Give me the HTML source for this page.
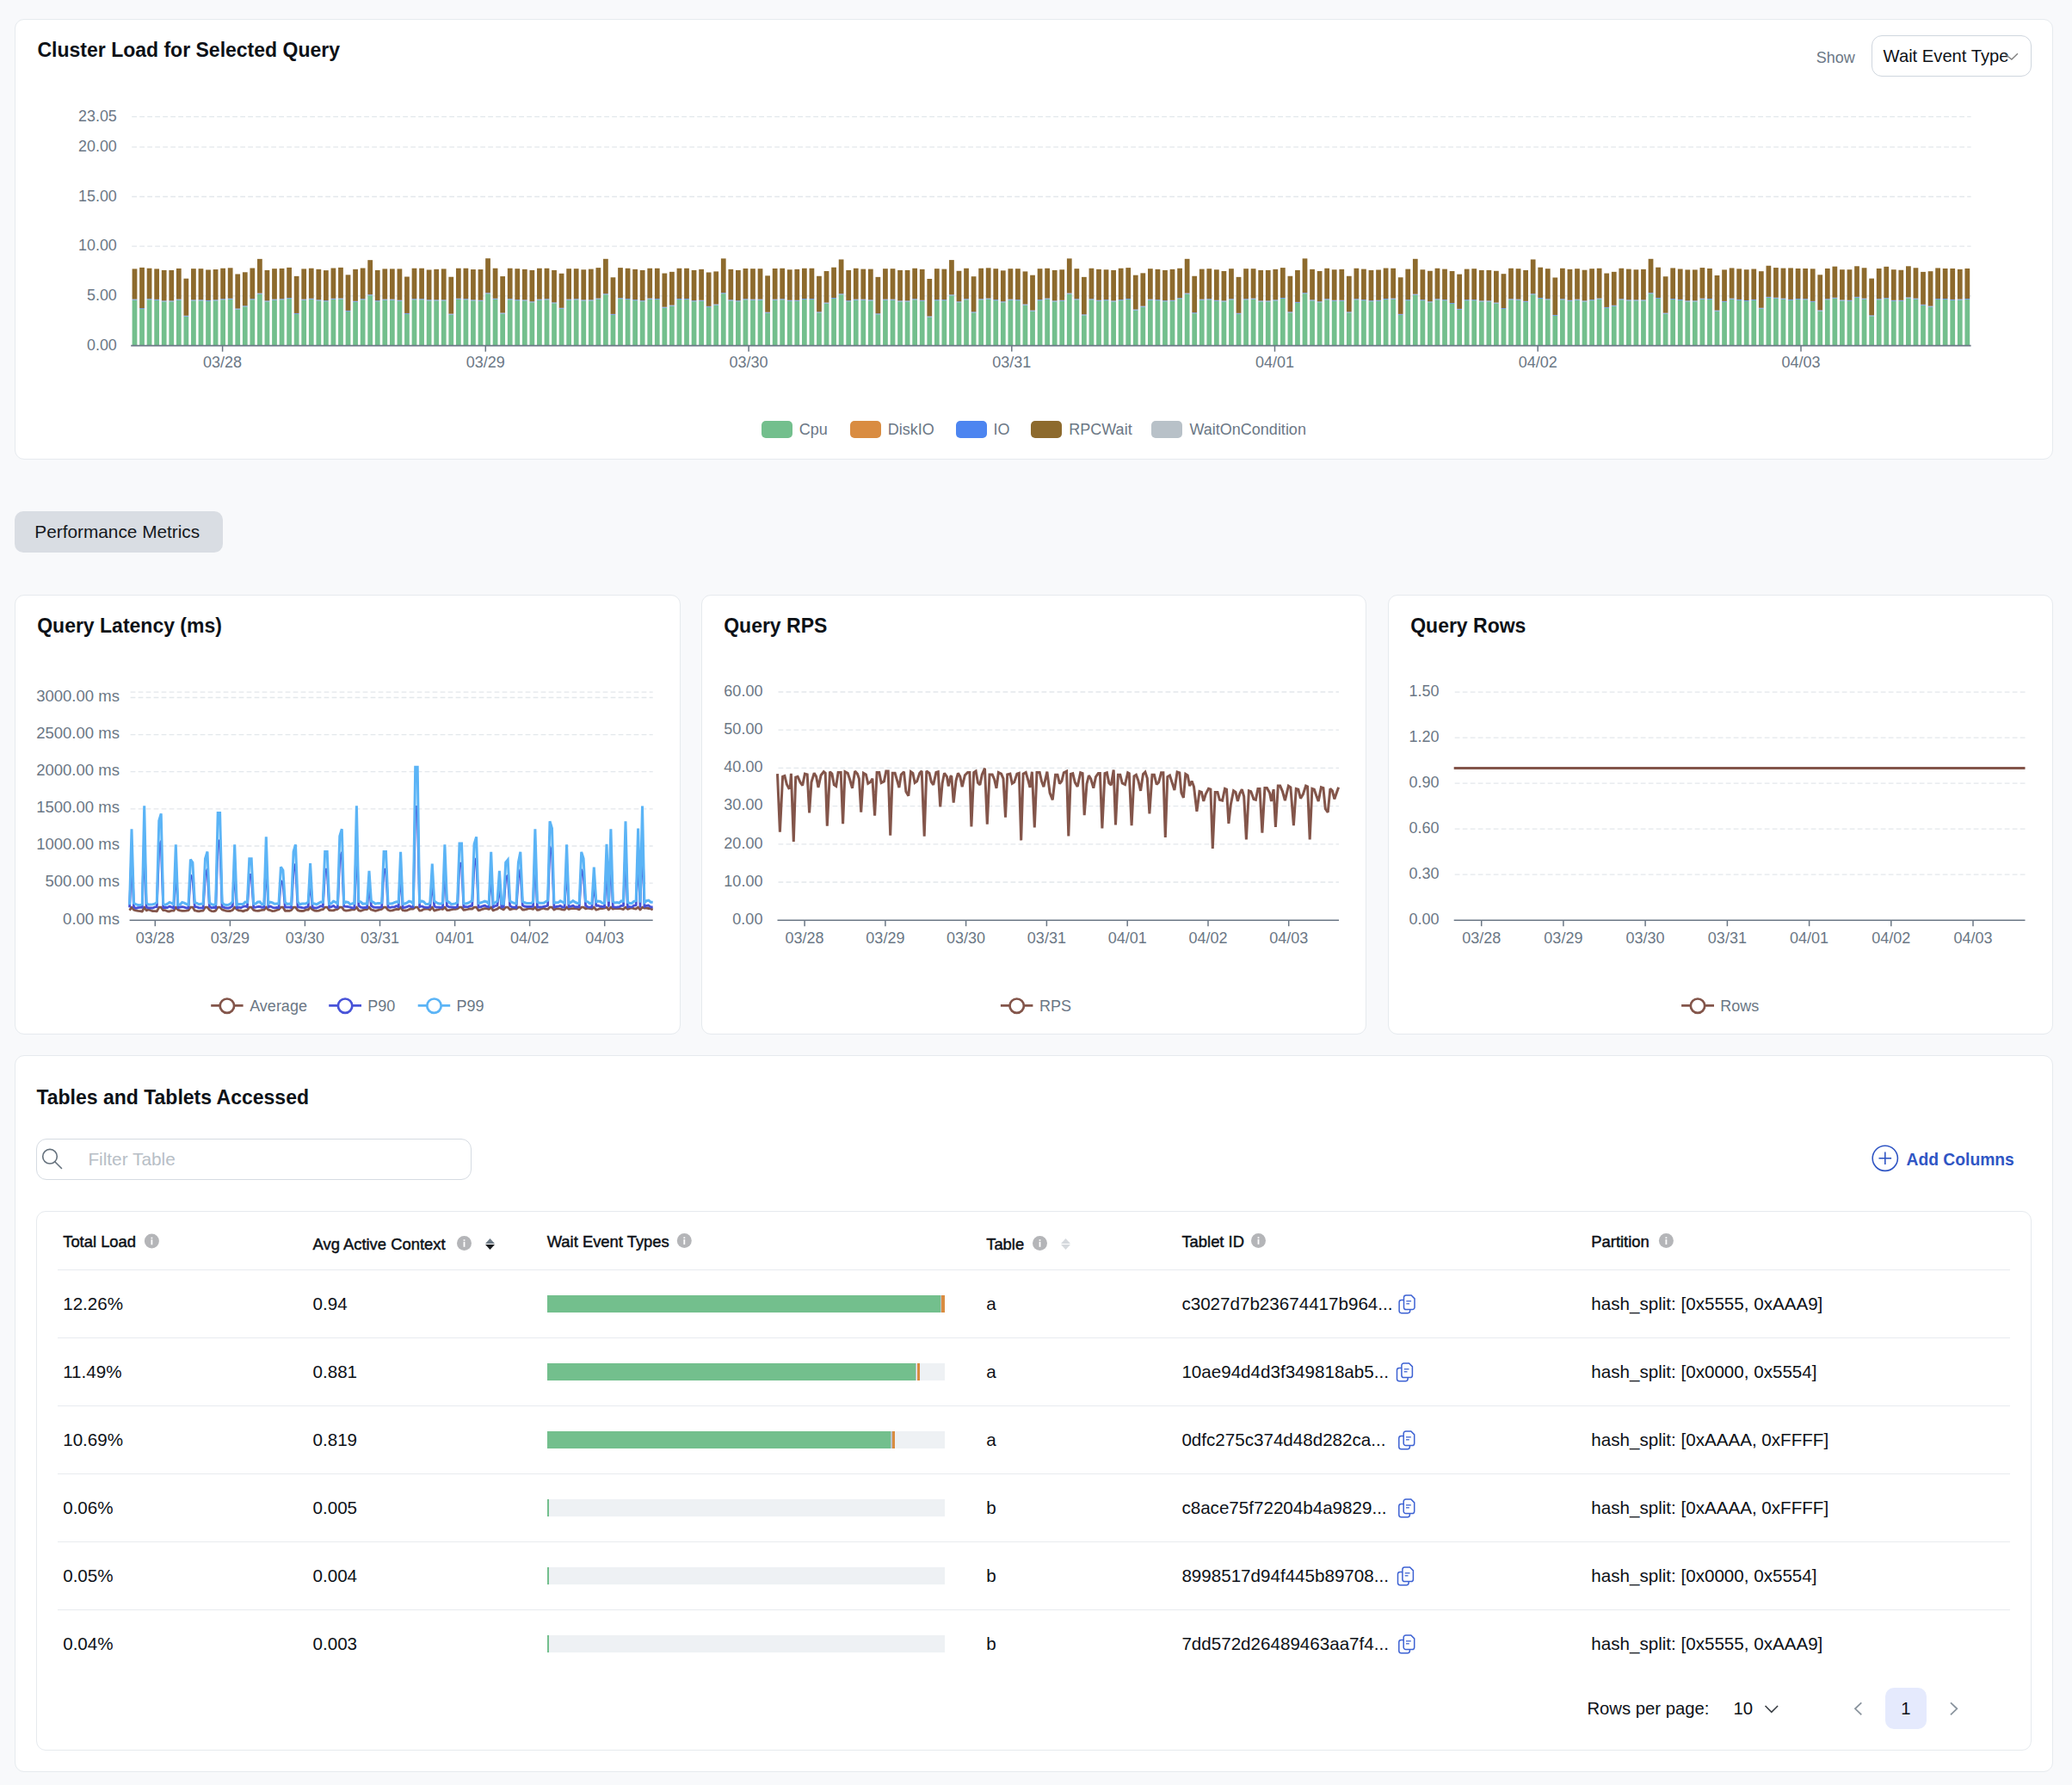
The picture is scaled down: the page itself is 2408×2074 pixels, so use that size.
<!DOCTYPE html>
<html><head><meta charset="utf-8"><style>
html,body{margin:0;padding:0;}
body{width:2408px;height:2074px;background:#f8f9fb;position:relative;overflow:hidden;font-family:"Liberation Sans", sans-serif;}
.t{position:absolute;white-space:nowrap;line-height:1;}
svg{position:absolute;left:0;top:0;}
</style></head><body>
<div style="position:absolute;left:17.0px;top:22.0px;width:2369.0px;height:512.0px;box-sizing:border-box;background:#fff;border:1px solid #e6eaee;border-radius:11px;"></div>
<div class="t" style="left:43.5px;top:47.2px;font-size:23px;color:#0d1117;font-weight:700;">Cluster Load for Selected Query</div>
<div class="t" style="left:2110.8px;top:58.2px;font-size:18px;color:#6b7785;font-weight:400;">Show</div>
<div style="position:absolute;left:2175.0px;top:41.0px;width:186.0px;height:48.0px;box-sizing:border-box;border:1.5px solid #cfd6de;border-radius:12px;background:#fff;"></div>
<div class="t" style="left:2188.6px;top:55.1px;font-size:20.2px;color:#0d1117;font-weight:400;">Wait Event Type</div>
<div class="t" style="right:2272.2px;top:126.8px;font-size:17.9px;color:#6b7785;font-weight:400;text-align:right;">23.05</div>
<div class="t" style="right:2272.2px;top:162.0px;font-size:17.9px;color:#6b7785;font-weight:400;text-align:right;">20.00</div>
<div class="t" style="right:2272.2px;top:219.7px;font-size:17.9px;color:#6b7785;font-weight:400;text-align:right;">15.00</div>
<div class="t" style="right:2272.2px;top:277.4px;font-size:17.9px;color:#6b7785;font-weight:400;text-align:right;">10.00</div>
<div class="t" style="right:2272.2px;top:335.1px;font-size:17.9px;color:#6b7785;font-weight:400;text-align:right;">5.00</div>
<div class="t" style="right:2272.2px;top:392.8px;font-size:17.9px;color:#6b7785;font-weight:400;text-align:right;">0.00</div>
<div class="t" style="left:58.6px;width:400px;top:412.0px;font-size:18px;color:#6b7785;font-weight:400;text-align:center;">03/28</div>
<div class="t" style="left:364.3px;width:400px;top:412.0px;font-size:18px;color:#6b7785;font-weight:400;text-align:center;">03/29</div>
<div class="t" style="left:670.1px;width:400px;top:412.0px;font-size:18px;color:#6b7785;font-weight:400;text-align:center;">03/30</div>
<div class="t" style="left:975.8px;width:400px;top:412.0px;font-size:18px;color:#6b7785;font-weight:400;text-align:center;">03/31</div>
<div class="t" style="left:1281.5px;width:400px;top:412.0px;font-size:18px;color:#6b7785;font-weight:400;text-align:center;">04/01</div>
<div class="t" style="left:1587.2px;width:400px;top:412.0px;font-size:18px;color:#6b7785;font-weight:400;text-align:center;">04/02</div>
<div class="t" style="left:1893.0px;width:400px;top:412.0px;font-size:18px;color:#6b7785;font-weight:400;text-align:center;">04/03</div>
<div style="position:absolute;left:884.7px;top:489.4px;width:36.0px;height:20.0px;box-sizing:border-box;background:#73bf8d;border-radius:5px;"></div>
<div class="t" style="left:928.8px;top:489.8px;font-size:18px;color:#6b7785;font-weight:400;">Cpu</div>
<div style="position:absolute;left:987.7px;top:489.4px;width:36.0px;height:20.0px;box-sizing:border-box;background:#d98c41;border-radius:5px;"></div>
<div class="t" style="left:1031.8px;top:489.8px;font-size:18px;color:#6b7785;font-weight:400;">DiskIO</div>
<div style="position:absolute;left:1110.7px;top:489.4px;width:36.0px;height:20.0px;box-sizing:border-box;background:#4d85f0;border-radius:5px;"></div>
<div class="t" style="left:1154.4px;top:489.8px;font-size:18px;color:#6b7785;font-weight:400;">IO</div>
<div style="position:absolute;left:1198.2px;top:489.4px;width:36.0px;height:20.0px;box-sizing:border-box;background:#8d6a2d;border-radius:5px;"></div>
<div class="t" style="left:1242.3px;top:489.8px;font-size:18px;color:#6b7785;font-weight:400;">RPCWait</div>
<div style="position:absolute;left:1338.4px;top:489.4px;width:36.0px;height:20.0px;box-sizing:border-box;background:#b8c1c8;border-radius:5px;"></div>
<div class="t" style="left:1382.5px;top:489.8px;font-size:18px;color:#6b7785;font-weight:400;">WaitOnCondition</div>
<div style="position:absolute;left:17.0px;top:594.0px;width:242.0px;height:48.0px;box-sizing:border-box;background:#d9dde3;border-radius:10px;"></div>
<div class="t" style="left:40.3px;top:607.6px;font-size:20.8px;color:#14181d;font-weight:400;">Performance Metrics</div>
<div style="position:absolute;left:17.0px;top:690.5px;width:774.0px;height:511.0px;box-sizing:border-box;background:#fff;border:1px solid #e6eaee;border-radius:11px;"></div>
<div class="t" style="left:43.2px;top:715.8px;font-size:23px;color:#0d1117;font-weight:700;">Query Latency (ms)</div>
<div style="position:absolute;left:815.0px;top:690.5px;width:773.0px;height:511.0px;box-sizing:border-box;background:#fff;border:1px solid #e6eaee;border-radius:11px;"></div>
<div class="t" style="left:841.2px;top:715.8px;font-size:23px;color:#0d1117;font-weight:700;">Query RPS</div>
<div style="position:absolute;left:1613.0px;top:690.5px;width:773.0px;height:511.0px;box-sizing:border-box;background:#fff;border:1px solid #e6eaee;border-radius:11px;"></div>
<div class="t" style="left:1639.2px;top:715.8px;font-size:23px;color:#0d1117;font-weight:700;">Query Rows</div>
<div class="t" style="right:2269.1px;top:1058.5px;font-size:18.5px;color:#6b7785;font-weight:400;text-align:right;">0.00 ms</div>
<div class="t" style="right:2269.1px;top:1015.4px;font-size:18.5px;color:#6b7785;font-weight:400;text-align:right;">500.00 ms</div>
<div class="t" style="right:2269.1px;top:972.3px;font-size:18.5px;color:#6b7785;font-weight:400;text-align:right;">1000.00 ms</div>
<div class="t" style="right:2269.1px;top:929.2px;font-size:18.5px;color:#6b7785;font-weight:400;text-align:right;">1500.00 ms</div>
<div class="t" style="right:2269.1px;top:886.1px;font-size:18.5px;color:#6b7785;font-weight:400;text-align:right;">2000.00 ms</div>
<div class="t" style="right:2269.1px;top:842.9px;font-size:18.5px;color:#6b7785;font-weight:400;text-align:right;">2500.00 ms</div>
<div class="t" style="right:2269.1px;top:799.8px;font-size:18.5px;color:#6b7785;font-weight:400;text-align:right;">3000.00 ms</div>
<div class="t" style="left:-19.7px;width:400px;top:1080.6px;font-size:18px;color:#6b7785;font-weight:400;text-align:center;">03/28</div>
<div class="t" style="left:67.4px;width:400px;top:1080.6px;font-size:18px;color:#6b7785;font-weight:400;text-align:center;">03/29</div>
<div class="t" style="left:154.4px;width:400px;top:1080.6px;font-size:18px;color:#6b7785;font-weight:400;text-align:center;">03/30</div>
<div class="t" style="left:241.5px;width:400px;top:1080.6px;font-size:18px;color:#6b7785;font-weight:400;text-align:center;">03/31</div>
<div class="t" style="left:328.6px;width:400px;top:1080.6px;font-size:18px;color:#6b7785;font-weight:400;text-align:center;">04/01</div>
<div class="t" style="left:415.6px;width:400px;top:1080.6px;font-size:18px;color:#6b7785;font-weight:400;text-align:center;">04/02</div>
<div class="t" style="left:502.7px;width:400px;top:1080.6px;font-size:18px;color:#6b7785;font-weight:400;text-align:center;">04/03</div>
<div class="t" style="left:290.2px;top:1159.8px;font-size:18px;color:#6b7785;font-weight:400;">Average</div>
<div class="t" style="left:427.3px;top:1159.8px;font-size:18px;color:#6b7785;font-weight:400;">P90</div>
<div class="t" style="left:530.4px;top:1159.8px;font-size:18px;color:#6b7785;font-weight:400;">P99</div>
<div class="t" style="right:1521.6px;top:1059.0px;font-size:18px;color:#6b7785;font-weight:400;text-align:right;">0.00</div>
<div class="t" style="right:1521.6px;top:1014.8px;font-size:18px;color:#6b7785;font-weight:400;text-align:right;">10.00</div>
<div class="t" style="right:1521.6px;top:970.6px;font-size:18px;color:#6b7785;font-weight:400;text-align:right;">20.00</div>
<div class="t" style="right:1521.6px;top:926.4px;font-size:18px;color:#6b7785;font-weight:400;text-align:right;">30.00</div>
<div class="t" style="right:1521.6px;top:882.2px;font-size:18px;color:#6b7785;font-weight:400;text-align:right;">40.00</div>
<div class="t" style="right:1521.6px;top:838.0px;font-size:18px;color:#6b7785;font-weight:400;text-align:right;">50.00</div>
<div class="t" style="right:1521.6px;top:793.8px;font-size:18px;color:#6b7785;font-weight:400;text-align:right;">60.00</div>
<div class="t" style="left:735.1px;width:400px;top:1080.6px;font-size:18px;color:#6b7785;font-weight:400;text-align:center;">03/28</div>
<div class="t" style="left:828.9px;width:400px;top:1080.6px;font-size:18px;color:#6b7785;font-weight:400;text-align:center;">03/29</div>
<div class="t" style="left:922.6px;width:400px;top:1080.6px;font-size:18px;color:#6b7785;font-weight:400;text-align:center;">03/30</div>
<div class="t" style="left:1016.4px;width:400px;top:1080.6px;font-size:18px;color:#6b7785;font-weight:400;text-align:center;">03/31</div>
<div class="t" style="left:1110.2px;width:400px;top:1080.6px;font-size:18px;color:#6b7785;font-weight:400;text-align:center;">04/01</div>
<div class="t" style="left:1204.0px;width:400px;top:1080.6px;font-size:18px;color:#6b7785;font-weight:400;text-align:center;">04/02</div>
<div class="t" style="left:1297.7px;width:400px;top:1080.6px;font-size:18px;color:#6b7785;font-weight:400;text-align:center;">04/03</div>
<div class="t" style="left:1208.0px;top:1159.8px;font-size:18px;color:#6b7785;font-weight:400;">RPS</div>
<div class="t" style="right:735.4px;top:1059.0px;font-size:18px;color:#6b7785;font-weight:400;text-align:right;">0.00</div>
<div class="t" style="right:735.4px;top:1006.0px;font-size:18px;color:#6b7785;font-weight:400;text-align:right;">0.30</div>
<div class="t" style="right:735.4px;top:953.0px;font-size:18px;color:#6b7785;font-weight:400;text-align:right;">0.60</div>
<div class="t" style="right:735.4px;top:900.0px;font-size:18px;color:#6b7785;font-weight:400;text-align:right;">0.90</div>
<div class="t" style="right:735.4px;top:847.0px;font-size:18px;color:#6b7785;font-weight:400;text-align:right;">1.20</div>
<div class="t" style="right:735.4px;top:794.0px;font-size:18px;color:#6b7785;font-weight:400;text-align:right;">1.50</div>
<div class="t" style="left:1521.7px;width:400px;top:1080.6px;font-size:18px;color:#6b7785;font-weight:400;text-align:center;">03/28</div>
<div class="t" style="left:1616.9px;width:400px;top:1080.6px;font-size:18px;color:#6b7785;font-weight:400;text-align:center;">03/29</div>
<div class="t" style="left:1712.1px;width:400px;top:1080.6px;font-size:18px;color:#6b7785;font-weight:400;text-align:center;">03/30</div>
<div class="t" style="left:1807.4px;width:400px;top:1080.6px;font-size:18px;color:#6b7785;font-weight:400;text-align:center;">03/31</div>
<div class="t" style="left:1902.6px;width:400px;top:1080.6px;font-size:18px;color:#6b7785;font-weight:400;text-align:center;">04/01</div>
<div class="t" style="left:1997.8px;width:400px;top:1080.6px;font-size:18px;color:#6b7785;font-weight:400;text-align:center;">04/02</div>
<div class="t" style="left:2093.0px;width:400px;top:1080.6px;font-size:18px;color:#6b7785;font-weight:400;text-align:center;">04/03</div>
<div class="t" style="left:1999.3px;top:1159.8px;font-size:18px;color:#6b7785;font-weight:400;">Rows</div>
<div style="position:absolute;left:17.0px;top:1226.0px;width:2369.0px;height:833.0px;box-sizing:border-box;background:#fff;border:1px solid #e6eaee;border-radius:11px;"></div>
<div class="t" style="left:42.4px;top:1263.9px;font-size:23px;color:#0d1117;font-weight:700;">Tables and Tablets Accessed</div>
<div style="position:absolute;left:42.2px;top:1323.3px;width:506.1px;height:47.3px;box-sizing:border-box;border:1.5px solid #d5dbe2;border-radius:12px;background:#fff;"></div>
<div class="t" style="left:102.4px;top:1336.8px;font-size:20.8px;color:#b7bec6;font-weight:400;">Filter Table</div>
<div class="t" style="left:2215.5px;top:1337.9px;font-size:19.3px;color:#2f55c4;font-weight:700;">Add Columns</div>
<div style="position:absolute;left:42.0px;top:1407.0px;width:2319.0px;height:627.0px;box-sizing:border-box;background:#fff;border:1px solid #e6eaee;border-radius:11px;"></div>
<div class="t" style="left:73.2px;top:1434.2px;font-size:18.4px;color:#0d1117;font-weight:400;-webkit-text-stroke:0.45px #0d1117;">Total Load</div>
<div class="t" style="left:363.5px;top:1437.0px;font-size:18.4px;color:#0d1117;font-weight:400;-webkit-text-stroke:0.45px #0d1117;">Avg Active Context</div>
<div class="t" style="left:635.7px;top:1434.2px;font-size:18.4px;color:#0d1117;font-weight:400;-webkit-text-stroke:0.45px #0d1117;">Wait Event Types</div>
<div class="t" style="left:1146.2px;top:1437.0px;font-size:18.4px;color:#0d1117;font-weight:400;-webkit-text-stroke:0.45px #0d1117;">Table</div>
<div class="t" style="left:1373.4px;top:1434.2px;font-size:18.4px;color:#0d1117;font-weight:400;-webkit-text-stroke:0.45px #0d1117;">Tablet ID</div>
<div class="t" style="left:1849.3px;top:1434.2px;font-size:18.4px;color:#0d1117;font-weight:400;-webkit-text-stroke:0.45px #0d1117;">Partition</div>
<div style="position:absolute;left:67.0px;top:1474.6px;width:2269.0px;height:1.4px;box-sizing:border-box;background:#e8ebef;"></div>
<div class="t" style="left:73.2px;top:1504.9px;font-size:20.6px;color:#0d1117;font-weight:400;">12.26%</div>
<div class="t" style="left:363.5px;top:1504.9px;font-size:20.6px;color:#0d1117;font-weight:400;">0.94</div>
<div style="position:absolute;left:636.1px;top:1504.5px;width:461.7px;height:20.7px;box-sizing:border-box;background:#eef1f4;"></div>
<div style="position:absolute;left:636.1px;top:1504.7px;width:457.1px;height:20.5px;box-sizing:border-box;background:#73bf8d;"></div>
<div style="position:absolute;left:1093.2px;top:1504.7px;width:1.2px;height:20.5px;box-sizing:border-box;background:#b9c3cb;"></div>
<div style="position:absolute;left:1094.4px;top:1504.7px;width:3.4px;height:20.5px;box-sizing:border-box;background:#d98c41;"></div>
<div class="t" style="left:1146.2px;top:1504.9px;font-size:20.6px;color:#0d1117;font-weight:400;">a</div>
<div class="t" id="tid0" style="left:1373.4px;top:1504.9px;font-size:20.6px;color:#0d1117">c3027d7b23674417b964...</div>
<div class="t" style="left:1849.3px;top:1504.9px;font-size:20.6px;color:#0d1117;font-weight:400;">hash_split: [0x5555, 0xAAA9]</div>
<div style="position:absolute;left:67.0px;top:1554.0px;width:2269.0px;height:1.3px;box-sizing:border-box;background:#e8ebef;"></div>
<div class="t" style="left:73.2px;top:1583.9px;font-size:20.6px;color:#0d1117;font-weight:400;">11.49%</div>
<div class="t" style="left:363.5px;top:1583.9px;font-size:20.6px;color:#0d1117;font-weight:400;">0.881</div>
<div style="position:absolute;left:636.1px;top:1583.5px;width:461.7px;height:20.7px;box-sizing:border-box;background:#eef1f4;"></div>
<div style="position:absolute;left:636.1px;top:1583.7px;width:428.2px;height:20.5px;box-sizing:border-box;background:#73bf8d;"></div>
<div style="position:absolute;left:1064.3px;top:1583.7px;width:1.2px;height:20.5px;box-sizing:border-box;background:#b9c3cb;"></div>
<div style="position:absolute;left:1065.5px;top:1583.7px;width:3.4px;height:20.5px;box-sizing:border-box;background:#d98c41;"></div>
<div class="t" style="left:1146.2px;top:1583.9px;font-size:20.6px;color:#0d1117;font-weight:400;">a</div>
<div class="t" id="tid1" style="left:1373.4px;top:1583.9px;font-size:20.6px;color:#0d1117">10ae94d4d3f349818ab5...</div>
<div class="t" style="left:1849.3px;top:1583.9px;font-size:20.6px;color:#0d1117;font-weight:400;">hash_split: [0x0000, 0x5554]</div>
<div style="position:absolute;left:67.0px;top:1633.0px;width:2269.0px;height:1.3px;box-sizing:border-box;background:#e8ebef;"></div>
<div class="t" style="left:73.2px;top:1662.9px;font-size:20.6px;color:#0d1117;font-weight:400;">10.69%</div>
<div class="t" style="left:363.5px;top:1662.9px;font-size:20.6px;color:#0d1117;font-weight:400;">0.819</div>
<div style="position:absolute;left:636.1px;top:1662.5px;width:461.7px;height:20.7px;box-sizing:border-box;background:#eef1f4;"></div>
<div style="position:absolute;left:636.1px;top:1662.7px;width:399.3px;height:20.5px;box-sizing:border-box;background:#73bf8d;"></div>
<div style="position:absolute;left:1035.4px;top:1662.7px;width:1.2px;height:20.5px;box-sizing:border-box;background:#b9c3cb;"></div>
<div style="position:absolute;left:1036.6px;top:1662.7px;width:3.4px;height:20.5px;box-sizing:border-box;background:#d98c41;"></div>
<div class="t" style="left:1146.2px;top:1662.9px;font-size:20.6px;color:#0d1117;font-weight:400;">a</div>
<div class="t" id="tid2" style="left:1373.4px;top:1662.9px;font-size:20.6px;color:#0d1117">0dfc275c374d48d282ca...</div>
<div class="t" style="left:1849.3px;top:1662.9px;font-size:20.6px;color:#0d1117;font-weight:400;">hash_split: [0xAAAA, 0xFFFF]</div>
<div style="position:absolute;left:67.0px;top:1712.0px;width:2269.0px;height:1.3px;box-sizing:border-box;background:#e8ebef;"></div>
<div class="t" style="left:73.2px;top:1741.9px;font-size:20.6px;color:#0d1117;font-weight:400;">0.06%</div>
<div class="t" style="left:363.5px;top:1741.9px;font-size:20.6px;color:#0d1117;font-weight:400;">0.005</div>
<div style="position:absolute;left:636.1px;top:1741.5px;width:461.7px;height:20.7px;box-sizing:border-box;background:#eef1f4;"></div>
<div style="position:absolute;left:636.1px;top:1741.7px;width:2.0px;height:20.5px;box-sizing:border-box;background:#73bf8d;"></div>
<div class="t" style="left:1146.2px;top:1741.9px;font-size:20.6px;color:#0d1117;font-weight:400;">b</div>
<div class="t" id="tid3" style="left:1373.4px;top:1741.9px;font-size:20.6px;color:#0d1117">c8ace75f72204b4a9829...</div>
<div class="t" style="left:1849.3px;top:1741.9px;font-size:20.6px;color:#0d1117;font-weight:400;">hash_split: [0xAAAA, 0xFFFF]</div>
<div style="position:absolute;left:67.0px;top:1791.0px;width:2269.0px;height:1.3px;box-sizing:border-box;background:#e8ebef;"></div>
<div class="t" style="left:73.2px;top:1820.9px;font-size:20.6px;color:#0d1117;font-weight:400;">0.05%</div>
<div class="t" style="left:363.5px;top:1820.9px;font-size:20.6px;color:#0d1117;font-weight:400;">0.004</div>
<div style="position:absolute;left:636.1px;top:1820.5px;width:461.7px;height:20.7px;box-sizing:border-box;background:#eef1f4;"></div>
<div style="position:absolute;left:636.1px;top:1820.7px;width:2.0px;height:20.5px;box-sizing:border-box;background:#73bf8d;"></div>
<div class="t" style="left:1146.2px;top:1820.9px;font-size:20.6px;color:#0d1117;font-weight:400;">b</div>
<div class="t" id="tid4" style="left:1373.4px;top:1820.9px;font-size:20.6px;color:#0d1117">8998517d94f445b89708...</div>
<div class="t" style="left:1849.3px;top:1820.9px;font-size:20.6px;color:#0d1117;font-weight:400;">hash_split: [0x0000, 0x5554]</div>
<div style="position:absolute;left:67.0px;top:1870.0px;width:2269.0px;height:1.3px;box-sizing:border-box;background:#e8ebef;"></div>
<div class="t" style="left:73.2px;top:1899.9px;font-size:20.6px;color:#0d1117;font-weight:400;">0.04%</div>
<div class="t" style="left:363.5px;top:1899.9px;font-size:20.6px;color:#0d1117;font-weight:400;">0.003</div>
<div style="position:absolute;left:636.1px;top:1899.5px;width:461.7px;height:20.7px;box-sizing:border-box;background:#eef1f4;"></div>
<div style="position:absolute;left:636.1px;top:1899.7px;width:2.0px;height:20.5px;box-sizing:border-box;background:#73bf8d;"></div>
<div class="t" style="left:1146.2px;top:1899.9px;font-size:20.6px;color:#0d1117;font-weight:400;">b</div>
<div class="t" id="tid5" style="left:1373.4px;top:1899.9px;font-size:20.6px;color:#0d1117">7dd572d26489463aa7f4...</div>
<div class="t" style="left:1849.3px;top:1899.9px;font-size:20.6px;color:#0d1117;font-weight:400;">hash_split: [0x5555, 0xAAA9]</div>
<div class="t" style="left:1844.4px;top:1975.2px;font-size:20.3px;color:#0d1117;font-weight:400;">Rows per page:</div>
<div class="t" style="left:2014.6px;top:1975.2px;font-size:20.3px;color:#0d1117;font-weight:400;">10</div>
<div style="position:absolute;left:2191.1px;top:1961.0px;width:47.6px;height:47.6px;box-sizing:border-box;background:#e5eafd;border-radius:10px;"></div>
<div class="t" style="left:2014.9px;width:400px;top:1975.2px;font-size:20.3px;color:#0d1117;font-weight:400;text-align:center;">1</div>
<svg width="2408" height="2074" viewBox="0 0 2408 2074">
<polyline points="2330.3,63 2337.9,69 2344.9,62.2" fill="none" stroke="#808080" stroke-width="1.4"/>
<line x1="152.2" y1="135.6" x2="2290.6" y2="135.6" stroke="#e3e8ec" stroke-width="1.3" stroke-dasharray="5.8 3.2" stroke-dashoffset="-1"/>
<line x1="152.2" y1="170.8" x2="2290.6" y2="170.8" stroke="#e3e8ec" stroke-width="1.3" stroke-dasharray="5.8 3.2" stroke-dashoffset="-1"/>
<line x1="152.2" y1="228.5" x2="2290.6" y2="228.5" stroke="#e3e8ec" stroke-width="1.3" stroke-dasharray="5.8 3.2" stroke-dashoffset="-1"/>
<line x1="152.2" y1="286.2" x2="2290.6" y2="286.2" stroke="#e3e8ec" stroke-width="1.3" stroke-dasharray="5.8 3.2" stroke-dashoffset="-1"/>
<line x1="152.2" y1="343.9" x2="2290.6" y2="343.9" stroke="#e3e8ec" stroke-width="1.3" stroke-dasharray="5.8 3.2" stroke-dashoffset="-1"/>
<rect x="153.61" y="348.65" width="5.74" height="52.95" fill="#73bf8d"/>
<rect x="153.61" y="347.65" width="5.74" height="1" fill="#6f9be6"/>
<rect x="153.61" y="312.38" width="5.74" height="35.27" fill="#8d6a2d"/>
<rect x="162.16" y="359.07" width="5.74" height="42.53" fill="#73bf8d"/>
<rect x="162.16" y="358.07" width="5.74" height="1" fill="#6f9be6"/>
<rect x="162.16" y="310.86" width="5.74" height="47.22" fill="#8d6a2d"/>
<rect x="170.71" y="348.21" width="5.74" height="53.39" fill="#73bf8d"/>
<rect x="170.71" y="347.21" width="5.74" height="1" fill="#6f9be6"/>
<rect x="170.71" y="311.72" width="5.74" height="35.49" fill="#8d6a2d"/>
<rect x="179.27" y="348.87" width="5.74" height="52.73" fill="#73bf8d"/>
<rect x="179.27" y="347.87" width="5.74" height="1" fill="#6f9be6"/>
<rect x="179.27" y="312.38" width="5.74" height="35.49" fill="#8d6a2d"/>
<rect x="187.82" y="350.39" width="5.74" height="51.21" fill="#73bf8d"/>
<rect x="187.82" y="349.39" width="5.74" height="1" fill="#6f9be6"/>
<rect x="187.82" y="313.90" width="5.74" height="35.49" fill="#8d6a2d"/>
<rect x="196.37" y="350.39" width="5.74" height="51.21" fill="#73bf8d"/>
<rect x="196.37" y="349.39" width="5.74" height="1" fill="#6f9be6"/>
<rect x="196.37" y="313.90" width="5.74" height="35.49" fill="#8d6a2d"/>
<rect x="204.93" y="348.65" width="5.74" height="52.95" fill="#73bf8d"/>
<rect x="204.93" y="347.65" width="5.74" height="1" fill="#6f9be6"/>
<rect x="204.93" y="311.94" width="5.74" height="35.71" fill="#8d6a2d"/>
<rect x="213.48" y="367.76" width="5.74" height="33.84" fill="#73bf8d"/>
<rect x="213.48" y="366.76" width="5.74" height="1" fill="#6f9be6"/>
<rect x="213.48" y="323.67" width="5.74" height="43.09" fill="#8d6a2d"/>
<rect x="222.04" y="349.30" width="5.74" height="52.30" fill="#73bf8d"/>
<rect x="222.04" y="348.30" width="5.74" height="1" fill="#6f9be6"/>
<rect x="222.04" y="312.16" width="5.74" height="36.14" fill="#8d6a2d"/>
<rect x="230.59" y="349.30" width="5.74" height="52.30" fill="#73bf8d"/>
<rect x="230.59" y="348.30" width="5.74" height="1" fill="#6f9be6"/>
<rect x="230.59" y="312.16" width="5.74" height="36.14" fill="#8d6a2d"/>
<rect x="239.14" y="349.95" width="5.74" height="51.65" fill="#73bf8d"/>
<rect x="239.14" y="348.95" width="5.74" height="1" fill="#6f9be6"/>
<rect x="239.14" y="313.46" width="5.74" height="35.49" fill="#8d6a2d"/>
<rect x="247.70" y="349.30" width="5.74" height="52.30" fill="#73bf8d"/>
<rect x="247.70" y="348.30" width="5.74" height="1" fill="#6f9be6"/>
<rect x="247.70" y="313.03" width="5.74" height="35.27" fill="#8d6a2d"/>
<rect x="256.25" y="348.21" width="5.74" height="53.39" fill="#73bf8d"/>
<rect x="256.25" y="347.21" width="5.74" height="1" fill="#6f9be6"/>
<rect x="256.25" y="311.72" width="5.74" height="35.49" fill="#8d6a2d"/>
<rect x="264.80" y="347.78" width="5.74" height="53.82" fill="#73bf8d"/>
<rect x="264.80" y="346.78" width="5.74" height="1" fill="#6f9be6"/>
<rect x="264.80" y="311.29" width="5.74" height="35.49" fill="#8d6a2d"/>
<rect x="273.36" y="359.51" width="5.74" height="42.09" fill="#73bf8d"/>
<rect x="273.36" y="358.51" width="5.74" height="1" fill="#6f9be6"/>
<rect x="273.36" y="318.46" width="5.74" height="40.05" fill="#8d6a2d"/>
<rect x="281.91" y="356.25" width="5.74" height="45.35" fill="#73bf8d"/>
<rect x="281.91" y="355.25" width="5.74" height="1" fill="#6f9be6"/>
<rect x="281.91" y="316.29" width="5.74" height="38.97" fill="#8d6a2d"/>
<rect x="290.46" y="348.21" width="5.74" height="53.39" fill="#73bf8d"/>
<rect x="290.46" y="347.21" width="5.74" height="1" fill="#6f9be6"/>
<rect x="290.46" y="311.51" width="5.74" height="35.71" fill="#8d6a2d"/>
<rect x="299.02" y="341.70" width="5.74" height="59.90" fill="#73bf8d"/>
<rect x="299.02" y="340.70" width="5.74" height="1" fill="#6f9be6"/>
<rect x="299.02" y="300.86" width="5.74" height="39.83" fill="#8d6a2d"/>
<rect x="307.57" y="350.39" width="5.74" height="51.21" fill="#73bf8d"/>
<rect x="307.57" y="349.39" width="5.74" height="1" fill="#6f9be6"/>
<rect x="307.57" y="313.90" width="5.74" height="35.49" fill="#8d6a2d"/>
<rect x="316.13" y="348.65" width="5.74" height="52.95" fill="#73bf8d"/>
<rect x="316.13" y="347.65" width="5.74" height="1" fill="#6f9be6"/>
<rect x="316.13" y="312.16" width="5.74" height="35.49" fill="#8d6a2d"/>
<rect x="324.68" y="348.21" width="5.74" height="53.39" fill="#73bf8d"/>
<rect x="324.68" y="347.21" width="5.74" height="1" fill="#6f9be6"/>
<rect x="324.68" y="311.94" width="5.74" height="35.27" fill="#8d6a2d"/>
<rect x="333.23" y="347.13" width="5.74" height="54.47" fill="#73bf8d"/>
<rect x="333.23" y="346.13" width="5.74" height="1" fill="#6f9be6"/>
<rect x="333.23" y="310.86" width="5.74" height="35.27" fill="#8d6a2d"/>
<rect x="341.79" y="364.94" width="5.74" height="36.66" fill="#73bf8d"/>
<rect x="341.79" y="363.94" width="5.74" height="1" fill="#6f9be6"/>
<rect x="341.79" y="320.85" width="5.74" height="43.09" fill="#8d6a2d"/>
<rect x="350.34" y="348.65" width="5.74" height="52.95" fill="#73bf8d"/>
<rect x="350.34" y="347.65" width="5.74" height="1" fill="#6f9be6"/>
<rect x="350.34" y="312.38" width="5.74" height="35.27" fill="#8d6a2d"/>
<rect x="358.89" y="347.78" width="5.74" height="53.82" fill="#73bf8d"/>
<rect x="358.89" y="346.78" width="5.74" height="1" fill="#6f9be6"/>
<rect x="358.89" y="311.72" width="5.74" height="35.06" fill="#8d6a2d"/>
<rect x="367.45" y="349.30" width="5.74" height="52.30" fill="#73bf8d"/>
<rect x="367.45" y="348.30" width="5.74" height="1" fill="#6f9be6"/>
<rect x="367.45" y="312.81" width="5.74" height="35.49" fill="#8d6a2d"/>
<rect x="376.00" y="350.17" width="5.74" height="51.43" fill="#73bf8d"/>
<rect x="376.00" y="349.17" width="5.74" height="1" fill="#6f9be6"/>
<rect x="376.00" y="314.11" width="5.74" height="35.06" fill="#8d6a2d"/>
<rect x="384.55" y="347.78" width="5.74" height="53.82" fill="#73bf8d"/>
<rect x="384.55" y="346.78" width="5.74" height="1" fill="#6f9be6"/>
<rect x="384.55" y="311.51" width="5.74" height="35.27" fill="#8d6a2d"/>
<rect x="393.11" y="347.56" width="5.74" height="54.04" fill="#73bf8d"/>
<rect x="393.11" y="346.56" width="5.74" height="1" fill="#6f9be6"/>
<rect x="393.11" y="310.86" width="5.74" height="35.71" fill="#8d6a2d"/>
<rect x="401.66" y="361.90" width="5.74" height="39.70" fill="#73bf8d"/>
<rect x="401.66" y="360.90" width="5.74" height="1" fill="#6f9be6"/>
<rect x="401.66" y="319.33" width="5.74" height="41.57" fill="#8d6a2d"/>
<rect x="410.21" y="350.82" width="5.74" height="50.78" fill="#73bf8d"/>
<rect x="410.21" y="349.82" width="5.74" height="1" fill="#6f9be6"/>
<rect x="410.21" y="312.81" width="5.74" height="37.01" fill="#8d6a2d"/>
<rect x="418.77" y="348.21" width="5.74" height="53.39" fill="#73bf8d"/>
<rect x="418.77" y="347.21" width="5.74" height="1" fill="#6f9be6"/>
<rect x="418.77" y="311.51" width="5.74" height="35.71" fill="#8d6a2d"/>
<rect x="427.32" y="343.22" width="5.74" height="58.38" fill="#73bf8d"/>
<rect x="427.32" y="342.22" width="5.74" height="1" fill="#6f9be6"/>
<rect x="427.32" y="302.17" width="5.74" height="40.05" fill="#8d6a2d"/>
<rect x="435.88" y="350.17" width="5.74" height="51.43" fill="#73bf8d"/>
<rect x="435.88" y="349.17" width="5.74" height="1" fill="#6f9be6"/>
<rect x="435.88" y="313.90" width="5.74" height="35.27" fill="#8d6a2d"/>
<rect x="444.43" y="348.65" width="5.74" height="52.95" fill="#73bf8d"/>
<rect x="444.43" y="347.65" width="5.74" height="1" fill="#6f9be6"/>
<rect x="444.43" y="312.38" width="5.74" height="35.27" fill="#8d6a2d"/>
<rect x="452.98" y="348.65" width="5.74" height="52.95" fill="#73bf8d"/>
<rect x="452.98" y="347.65" width="5.74" height="1" fill="#6f9be6"/>
<rect x="452.98" y="312.38" width="5.74" height="35.27" fill="#8d6a2d"/>
<rect x="461.54" y="349.74" width="5.74" height="51.86" fill="#73bf8d"/>
<rect x="461.54" y="348.74" width="5.74" height="1" fill="#6f9be6"/>
<rect x="461.54" y="312.38" width="5.74" height="36.36" fill="#8d6a2d"/>
<rect x="470.09" y="364.94" width="5.74" height="36.66" fill="#73bf8d"/>
<rect x="470.09" y="363.94" width="5.74" height="1" fill="#6f9be6"/>
<rect x="470.09" y="321.50" width="5.74" height="42.44" fill="#8d6a2d"/>
<rect x="478.64" y="348.21" width="5.74" height="53.39" fill="#73bf8d"/>
<rect x="478.64" y="347.21" width="5.74" height="1" fill="#6f9be6"/>
<rect x="478.64" y="311.72" width="5.74" height="35.49" fill="#8d6a2d"/>
<rect x="487.20" y="348.21" width="5.74" height="53.39" fill="#73bf8d"/>
<rect x="487.20" y="347.21" width="5.74" height="1" fill="#6f9be6"/>
<rect x="487.20" y="311.72" width="5.74" height="35.49" fill="#8d6a2d"/>
<rect x="495.75" y="349.30" width="5.74" height="52.30" fill="#73bf8d"/>
<rect x="495.75" y="348.30" width="5.74" height="1" fill="#6f9be6"/>
<rect x="495.75" y="313.46" width="5.74" height="34.84" fill="#8d6a2d"/>
<rect x="504.30" y="349.30" width="5.74" height="52.30" fill="#73bf8d"/>
<rect x="504.30" y="348.30" width="5.74" height="1" fill="#6f9be6"/>
<rect x="504.30" y="312.81" width="5.74" height="35.49" fill="#8d6a2d"/>
<rect x="512.86" y="349.30" width="5.74" height="52.30" fill="#73bf8d"/>
<rect x="512.86" y="348.30" width="5.74" height="1" fill="#6f9be6"/>
<rect x="512.86" y="312.38" width="5.74" height="35.92" fill="#8d6a2d"/>
<rect x="521.41" y="365.59" width="5.74" height="36.01" fill="#73bf8d"/>
<rect x="521.41" y="364.59" width="5.74" height="1" fill="#6f9be6"/>
<rect x="521.41" y="321.72" width="5.74" height="42.87" fill="#8d6a2d"/>
<rect x="529.97" y="347.78" width="5.74" height="53.82" fill="#73bf8d"/>
<rect x="529.97" y="346.78" width="5.74" height="1" fill="#6f9be6"/>
<rect x="529.97" y="311.72" width="5.74" height="35.06" fill="#8d6a2d"/>
<rect x="538.52" y="348.21" width="5.74" height="53.39" fill="#73bf8d"/>
<rect x="538.52" y="347.21" width="5.74" height="1" fill="#6f9be6"/>
<rect x="538.52" y="311.72" width="5.74" height="35.49" fill="#8d6a2d"/>
<rect x="547.07" y="349.30" width="5.74" height="52.30" fill="#73bf8d"/>
<rect x="547.07" y="348.30" width="5.74" height="1" fill="#6f9be6"/>
<rect x="547.07" y="313.03" width="5.74" height="35.27" fill="#8d6a2d"/>
<rect x="555.63" y="349.74" width="5.74" height="51.86" fill="#73bf8d"/>
<rect x="555.63" y="348.74" width="5.74" height="1" fill="#6f9be6"/>
<rect x="555.63" y="313.03" width="5.74" height="35.71" fill="#8d6a2d"/>
<rect x="564.18" y="341.26" width="5.74" height="60.34" fill="#73bf8d"/>
<rect x="564.18" y="340.26" width="5.74" height="1" fill="#6f9be6"/>
<rect x="564.18" y="300.21" width="5.74" height="40.05" fill="#8d6a2d"/>
<rect x="572.73" y="347.78" width="5.74" height="53.82" fill="#73bf8d"/>
<rect x="572.73" y="346.78" width="5.74" height="1" fill="#6f9be6"/>
<rect x="572.73" y="311.72" width="5.74" height="35.06" fill="#8d6a2d"/>
<rect x="581.29" y="364.50" width="5.74" height="37.10" fill="#73bf8d"/>
<rect x="581.29" y="363.50" width="5.74" height="1" fill="#6f9be6"/>
<rect x="581.29" y="321.06" width="5.74" height="42.44" fill="#8d6a2d"/>
<rect x="589.84" y="348.21" width="5.74" height="53.39" fill="#73bf8d"/>
<rect x="589.84" y="347.21" width="5.74" height="1" fill="#6f9be6"/>
<rect x="589.84" y="311.72" width="5.74" height="35.49" fill="#8d6a2d"/>
<rect x="598.39" y="349.12" width="5.74" height="52.48" fill="#73bf8d"/>
<rect x="598.39" y="348.12" width="5.74" height="1" fill="#6f9be6"/>
<rect x="598.39" y="312.18" width="5.74" height="35.94" fill="#8d6a2d"/>
<rect x="606.95" y="349.34" width="5.74" height="52.26" fill="#73bf8d"/>
<rect x="606.95" y="348.34" width="5.74" height="1" fill="#6f9be6"/>
<rect x="606.95" y="312.83" width="5.74" height="35.51" fill="#8d6a2d"/>
<rect x="615.50" y="351.27" width="5.74" height="50.33" fill="#73bf8d"/>
<rect x="615.50" y="350.27" width="5.74" height="1" fill="#6f9be6"/>
<rect x="615.50" y="313.90" width="5.74" height="36.37" fill="#8d6a2d"/>
<rect x="624.05" y="348.69" width="5.74" height="52.91" fill="#73bf8d"/>
<rect x="624.05" y="347.69" width="5.74" height="1" fill="#6f9be6"/>
<rect x="624.05" y="311.75" width="5.74" height="35.94" fill="#8d6a2d"/>
<rect x="632.61" y="348.26" width="5.74" height="53.34" fill="#73bf8d"/>
<rect x="632.61" y="347.26" width="5.74" height="1" fill="#6f9be6"/>
<rect x="632.61" y="311.75" width="5.74" height="35.51" fill="#8d6a2d"/>
<rect x="641.16" y="352.35" width="5.74" height="49.25" fill="#73bf8d"/>
<rect x="641.16" y="351.35" width="5.74" height="1" fill="#6f9be6"/>
<rect x="641.16" y="313.90" width="5.74" height="37.45" fill="#8d6a2d"/>
<rect x="649.72" y="358.79" width="5.74" height="42.81" fill="#73bf8d"/>
<rect x="649.72" y="357.79" width="5.74" height="1" fill="#6f9be6"/>
<rect x="649.72" y="317.77" width="5.74" height="40.02" fill="#8d6a2d"/>
<rect x="658.27" y="348.69" width="5.74" height="52.91" fill="#73bf8d"/>
<rect x="658.27" y="347.69" width="5.74" height="1" fill="#6f9be6"/>
<rect x="658.27" y="312.18" width="5.74" height="35.51" fill="#8d6a2d"/>
<rect x="666.82" y="348.26" width="5.74" height="53.34" fill="#73bf8d"/>
<rect x="666.82" y="347.26" width="5.74" height="1" fill="#6f9be6"/>
<rect x="666.82" y="312.18" width="5.74" height="35.08" fill="#8d6a2d"/>
<rect x="675.38" y="349.34" width="5.74" height="52.26" fill="#73bf8d"/>
<rect x="675.38" y="348.34" width="5.74" height="1" fill="#6f9be6"/>
<rect x="675.38" y="313.26" width="5.74" height="35.08" fill="#8d6a2d"/>
<rect x="683.93" y="349.34" width="5.74" height="52.26" fill="#73bf8d"/>
<rect x="683.93" y="348.34" width="5.74" height="1" fill="#6f9be6"/>
<rect x="683.93" y="312.61" width="5.74" height="35.73" fill="#8d6a2d"/>
<rect x="692.48" y="347.62" width="5.74" height="53.98" fill="#73bf8d"/>
<rect x="692.48" y="346.62" width="5.74" height="1" fill="#6f9be6"/>
<rect x="692.48" y="311.11" width="5.74" height="35.51" fill="#8d6a2d"/>
<rect x="701.04" y="342.25" width="5.74" height="59.35" fill="#73bf8d"/>
<rect x="701.04" y="341.25" width="5.74" height="1" fill="#6f9be6"/>
<rect x="701.04" y="300.80" width="5.74" height="40.45" fill="#8d6a2d"/>
<rect x="709.59" y="365.88" width="5.74" height="35.72" fill="#73bf8d"/>
<rect x="709.59" y="364.88" width="5.74" height="1" fill="#6f9be6"/>
<rect x="709.59" y="322.28" width="5.74" height="42.60" fill="#8d6a2d"/>
<rect x="718.14" y="347.19" width="5.74" height="54.41" fill="#73bf8d"/>
<rect x="718.14" y="346.19" width="5.74" height="1" fill="#6f9be6"/>
<rect x="718.14" y="311.11" width="5.74" height="35.08" fill="#8d6a2d"/>
<rect x="726.70" y="348.05" width="5.74" height="53.55" fill="#73bf8d"/>
<rect x="726.70" y="347.05" width="5.74" height="1" fill="#6f9be6"/>
<rect x="726.70" y="311.75" width="5.74" height="35.30" fill="#8d6a2d"/>
<rect x="735.25" y="349.12" width="5.74" height="52.48" fill="#73bf8d"/>
<rect x="735.25" y="348.12" width="5.74" height="1" fill="#6f9be6"/>
<rect x="735.25" y="312.83" width="5.74" height="35.30" fill="#8d6a2d"/>
<rect x="743.81" y="350.20" width="5.74" height="51.40" fill="#73bf8d"/>
<rect x="743.81" y="349.20" width="5.74" height="1" fill="#6f9be6"/>
<rect x="743.81" y="313.90" width="5.74" height="35.30" fill="#8d6a2d"/>
<rect x="752.36" y="347.62" width="5.74" height="53.98" fill="#73bf8d"/>
<rect x="752.36" y="346.62" width="5.74" height="1" fill="#6f9be6"/>
<rect x="752.36" y="311.75" width="5.74" height="34.87" fill="#8d6a2d"/>
<rect x="760.91" y="348.05" width="5.74" height="53.55" fill="#73bf8d"/>
<rect x="760.91" y="347.05" width="5.74" height="1" fill="#6f9be6"/>
<rect x="760.91" y="311.75" width="5.74" height="35.30" fill="#8d6a2d"/>
<rect x="769.47" y="357.71" width="5.74" height="43.89" fill="#73bf8d"/>
<rect x="769.47" y="356.71" width="5.74" height="1" fill="#6f9be6"/>
<rect x="769.47" y="317.55" width="5.74" height="39.16" fill="#8d6a2d"/>
<rect x="778.02" y="355.57" width="5.74" height="46.03" fill="#73bf8d"/>
<rect x="778.02" y="354.57" width="5.74" height="1" fill="#6f9be6"/>
<rect x="778.02" y="315.83" width="5.74" height="38.73" fill="#8d6a2d"/>
<rect x="786.57" y="348.05" width="5.74" height="53.55" fill="#73bf8d"/>
<rect x="786.57" y="347.05" width="5.74" height="1" fill="#6f9be6"/>
<rect x="786.57" y="311.75" width="5.74" height="35.30" fill="#8d6a2d"/>
<rect x="795.13" y="348.05" width="5.74" height="53.55" fill="#73bf8d"/>
<rect x="795.13" y="347.05" width="5.74" height="1" fill="#6f9be6"/>
<rect x="795.13" y="311.75" width="5.74" height="35.30" fill="#8d6a2d"/>
<rect x="803.68" y="350.20" width="5.74" height="51.40" fill="#73bf8d"/>
<rect x="803.68" y="349.20" width="5.74" height="1" fill="#6f9be6"/>
<rect x="803.68" y="313.90" width="5.74" height="35.30" fill="#8d6a2d"/>
<rect x="812.23" y="349.77" width="5.74" height="51.83" fill="#73bf8d"/>
<rect x="812.23" y="348.77" width="5.74" height="1" fill="#6f9be6"/>
<rect x="812.23" y="312.83" width="5.74" height="35.94" fill="#8d6a2d"/>
<rect x="820.79" y="356.86" width="5.74" height="44.74" fill="#73bf8d"/>
<rect x="820.79" y="355.86" width="5.74" height="1" fill="#6f9be6"/>
<rect x="820.79" y="316.48" width="5.74" height="39.38" fill="#8d6a2d"/>
<rect x="829.34" y="354.49" width="5.74" height="47.11" fill="#73bf8d"/>
<rect x="829.34" y="353.49" width="5.74" height="1" fill="#6f9be6"/>
<rect x="829.34" y="315.40" width="5.74" height="38.09" fill="#8d6a2d"/>
<rect x="837.89" y="341.18" width="5.74" height="60.42" fill="#73bf8d"/>
<rect x="837.89" y="340.18" width="5.74" height="1" fill="#6f9be6"/>
<rect x="837.89" y="300.37" width="5.74" height="39.81" fill="#8d6a2d"/>
<rect x="846.45" y="349.34" width="5.74" height="52.26" fill="#73bf8d"/>
<rect x="846.45" y="348.34" width="5.74" height="1" fill="#6f9be6"/>
<rect x="846.45" y="312.83" width="5.74" height="35.51" fill="#8d6a2d"/>
<rect x="855.00" y="350.20" width="5.74" height="51.40" fill="#73bf8d"/>
<rect x="855.00" y="349.20" width="5.74" height="1" fill="#6f9be6"/>
<rect x="855.00" y="313.90" width="5.74" height="35.30" fill="#8d6a2d"/>
<rect x="863.56" y="348.26" width="5.74" height="53.34" fill="#73bf8d"/>
<rect x="863.56" y="347.26" width="5.74" height="1" fill="#6f9be6"/>
<rect x="863.56" y="311.97" width="5.74" height="35.30" fill="#8d6a2d"/>
<rect x="872.11" y="348.69" width="5.74" height="52.91" fill="#73bf8d"/>
<rect x="872.11" y="347.69" width="5.74" height="1" fill="#6f9be6"/>
<rect x="872.11" y="312.18" width="5.74" height="35.51" fill="#8d6a2d"/>
<rect x="880.66" y="348.69" width="5.74" height="52.91" fill="#73bf8d"/>
<rect x="880.66" y="347.69" width="5.74" height="1" fill="#6f9be6"/>
<rect x="880.66" y="312.18" width="5.74" height="35.51" fill="#8d6a2d"/>
<rect x="889.22" y="363.73" width="5.74" height="37.87" fill="#73bf8d"/>
<rect x="889.22" y="362.73" width="5.74" height="1" fill="#6f9be6"/>
<rect x="889.22" y="320.34" width="5.74" height="42.38" fill="#8d6a2d"/>
<rect x="897.77" y="348.69" width="5.74" height="52.91" fill="#73bf8d"/>
<rect x="897.77" y="347.69" width="5.74" height="1" fill="#6f9be6"/>
<rect x="897.77" y="311.97" width="5.74" height="35.73" fill="#8d6a2d"/>
<rect x="906.32" y="348.26" width="5.74" height="53.34" fill="#73bf8d"/>
<rect x="906.32" y="347.26" width="5.74" height="1" fill="#6f9be6"/>
<rect x="906.32" y="311.75" width="5.74" height="35.51" fill="#8d6a2d"/>
<rect x="914.88" y="349.77" width="5.74" height="51.83" fill="#73bf8d"/>
<rect x="914.88" y="348.77" width="5.74" height="1" fill="#6f9be6"/>
<rect x="914.88" y="313.26" width="5.74" height="35.51" fill="#8d6a2d"/>
<rect x="923.43" y="349.77" width="5.74" height="51.83" fill="#73bf8d"/>
<rect x="923.43" y="348.77" width="5.74" height="1" fill="#6f9be6"/>
<rect x="923.43" y="312.83" width="5.74" height="35.94" fill="#8d6a2d"/>
<rect x="931.98" y="348.05" width="5.74" height="53.55" fill="#73bf8d"/>
<rect x="931.98" y="347.05" width="5.74" height="1" fill="#6f9be6"/>
<rect x="931.98" y="311.75" width="5.74" height="35.30" fill="#8d6a2d"/>
<rect x="940.54" y="348.05" width="5.74" height="53.55" fill="#73bf8d"/>
<rect x="940.54" y="347.05" width="5.74" height="1" fill="#6f9be6"/>
<rect x="940.54" y="311.75" width="5.74" height="35.30" fill="#8d6a2d"/>
<rect x="949.09" y="363.30" width="5.74" height="38.30" fill="#73bf8d"/>
<rect x="949.09" y="362.30" width="5.74" height="1" fill="#6f9be6"/>
<rect x="949.09" y="320.77" width="5.74" height="41.53" fill="#8d6a2d"/>
<rect x="957.65" y="352.56" width="5.74" height="49.04" fill="#73bf8d"/>
<rect x="957.65" y="351.56" width="5.74" height="1" fill="#6f9be6"/>
<rect x="957.65" y="314.97" width="5.74" height="36.59" fill="#8d6a2d"/>
<rect x="966.20" y="346.98" width="5.74" height="54.62" fill="#73bf8d"/>
<rect x="966.20" y="345.98" width="5.74" height="1" fill="#6f9be6"/>
<rect x="966.20" y="310.68" width="5.74" height="35.30" fill="#8d6a2d"/>
<rect x="974.75" y="342.25" width="5.74" height="59.35" fill="#73bf8d"/>
<rect x="974.75" y="341.25" width="5.74" height="1" fill="#6f9be6"/>
<rect x="974.75" y="301.44" width="5.74" height="39.81" fill="#8d6a2d"/>
<rect x="983.31" y="350.20" width="5.74" height="51.40" fill="#73bf8d"/>
<rect x="983.31" y="349.20" width="5.74" height="1" fill="#6f9be6"/>
<rect x="983.31" y="313.90" width="5.74" height="35.30" fill="#8d6a2d"/>
<rect x="991.86" y="348.69" width="5.74" height="52.91" fill="#73bf8d"/>
<rect x="991.86" y="347.69" width="5.74" height="1" fill="#6f9be6"/>
<rect x="991.86" y="311.75" width="5.74" height="35.94" fill="#8d6a2d"/>
<rect x="1000.41" y="348.69" width="5.74" height="52.91" fill="#73bf8d"/>
<rect x="1000.41" y="347.69" width="5.74" height="1" fill="#6f9be6"/>
<rect x="1000.41" y="312.61" width="5.74" height="35.08" fill="#8d6a2d"/>
<rect x="1008.97" y="349.34" width="5.74" height="52.26" fill="#73bf8d"/>
<rect x="1008.97" y="348.34" width="5.74" height="1" fill="#6f9be6"/>
<rect x="1008.97" y="312.61" width="5.74" height="35.73" fill="#8d6a2d"/>
<rect x="1017.52" y="365.23" width="5.74" height="36.37" fill="#73bf8d"/>
<rect x="1017.52" y="364.23" width="5.74" height="1" fill="#6f9be6"/>
<rect x="1017.52" y="321.85" width="5.74" height="42.38" fill="#8d6a2d"/>
<rect x="1026.07" y="348.69" width="5.74" height="52.91" fill="#73bf8d"/>
<rect x="1026.07" y="347.69" width="5.74" height="1" fill="#6f9be6"/>
<rect x="1026.07" y="312.18" width="5.74" height="35.51" fill="#8d6a2d"/>
<rect x="1034.63" y="348.69" width="5.74" height="52.91" fill="#73bf8d"/>
<rect x="1034.63" y="347.69" width="5.74" height="1" fill="#6f9be6"/>
<rect x="1034.63" y="312.18" width="5.74" height="35.51" fill="#8d6a2d"/>
<rect x="1043.18" y="350.41" width="5.74" height="51.19" fill="#73bf8d"/>
<rect x="1043.18" y="349.41" width="5.74" height="1" fill="#6f9be6"/>
<rect x="1043.18" y="313.90" width="5.74" height="35.51" fill="#8d6a2d"/>
<rect x="1051.73" y="350.41" width="5.74" height="51.19" fill="#73bf8d"/>
<rect x="1051.73" y="349.41" width="5.74" height="1" fill="#6f9be6"/>
<rect x="1051.73" y="313.90" width="5.74" height="35.51" fill="#8d6a2d"/>
<rect x="1060.29" y="348.26" width="5.74" height="53.34" fill="#73bf8d"/>
<rect x="1060.29" y="347.26" width="5.74" height="1" fill="#6f9be6"/>
<rect x="1060.29" y="311.75" width="5.74" height="35.51" fill="#8d6a2d"/>
<rect x="1068.84" y="349.77" width="5.74" height="51.83" fill="#73bf8d"/>
<rect x="1068.84" y="348.77" width="5.74" height="1" fill="#6f9be6"/>
<rect x="1068.84" y="312.83" width="5.74" height="35.94" fill="#8d6a2d"/>
<rect x="1077.40" y="368.45" width="5.74" height="33.15" fill="#73bf8d"/>
<rect x="1077.40" y="367.45" width="5.74" height="1" fill="#6f9be6"/>
<rect x="1077.40" y="323.99" width="5.74" height="43.46" fill="#8d6a2d"/>
<rect x="1085.95" y="349.12" width="5.74" height="52.48" fill="#73bf8d"/>
<rect x="1085.95" y="348.12" width="5.74" height="1" fill="#6f9be6"/>
<rect x="1085.95" y="312.18" width="5.74" height="35.94" fill="#8d6a2d"/>
<rect x="1094.50" y="349.12" width="5.74" height="52.48" fill="#73bf8d"/>
<rect x="1094.50" y="348.12" width="5.74" height="1" fill="#6f9be6"/>
<rect x="1094.50" y="312.61" width="5.74" height="35.51" fill="#8d6a2d"/>
<rect x="1103.06" y="343.32" width="5.74" height="58.28" fill="#73bf8d"/>
<rect x="1103.06" y="342.32" width="5.74" height="1" fill="#6f9be6"/>
<rect x="1103.06" y="302.09" width="5.74" height="40.24" fill="#8d6a2d"/>
<rect x="1111.61" y="351.27" width="5.74" height="50.33" fill="#73bf8d"/>
<rect x="1111.61" y="350.27" width="5.74" height="1" fill="#6f9be6"/>
<rect x="1111.61" y="314.76" width="5.74" height="35.51" fill="#8d6a2d"/>
<rect x="1120.16" y="348.26" width="5.74" height="53.34" fill="#73bf8d"/>
<rect x="1120.16" y="347.26" width="5.74" height="1" fill="#6f9be6"/>
<rect x="1120.16" y="311.75" width="5.74" height="35.51" fill="#8d6a2d"/>
<rect x="1128.72" y="363.30" width="5.74" height="38.30" fill="#73bf8d"/>
<rect x="1128.72" y="362.30" width="5.74" height="1" fill="#6f9be6"/>
<rect x="1128.72" y="321.20" width="5.74" height="41.10" fill="#8d6a2d"/>
<rect x="1137.27" y="348.26" width="5.74" height="53.34" fill="#73bf8d"/>
<rect x="1137.27" y="347.26" width="5.74" height="1" fill="#6f9be6"/>
<rect x="1137.27" y="311.75" width="5.74" height="35.51" fill="#8d6a2d"/>
<rect x="1145.82" y="347.62" width="5.74" height="53.98" fill="#73bf8d"/>
<rect x="1145.82" y="346.62" width="5.74" height="1" fill="#6f9be6"/>
<rect x="1145.82" y="311.32" width="5.74" height="35.30" fill="#8d6a2d"/>
<rect x="1154.38" y="349.12" width="5.74" height="52.48" fill="#73bf8d"/>
<rect x="1154.38" y="348.12" width="5.74" height="1" fill="#6f9be6"/>
<rect x="1154.38" y="312.18" width="5.74" height="35.94" fill="#8d6a2d"/>
<rect x="1162.93" y="351.27" width="5.74" height="50.33" fill="#73bf8d"/>
<rect x="1162.93" y="350.27" width="5.74" height="1" fill="#6f9be6"/>
<rect x="1162.93" y="314.33" width="5.74" height="35.94" fill="#8d6a2d"/>
<rect x="1171.49" y="348.69" width="5.74" height="52.91" fill="#73bf8d"/>
<rect x="1171.49" y="347.69" width="5.74" height="1" fill="#6f9be6"/>
<rect x="1171.49" y="312.18" width="5.74" height="35.51" fill="#8d6a2d"/>
<rect x="1180.04" y="349.12" width="5.74" height="52.48" fill="#73bf8d"/>
<rect x="1180.04" y="348.12" width="5.74" height="1" fill="#6f9be6"/>
<rect x="1180.04" y="312.18" width="5.74" height="35.94" fill="#8d6a2d"/>
<rect x="1188.59" y="354.49" width="5.74" height="47.11" fill="#73bf8d"/>
<rect x="1188.59" y="353.49" width="5.74" height="1" fill="#6f9be6"/>
<rect x="1188.59" y="315.40" width="5.74" height="38.09" fill="#8d6a2d"/>
<rect x="1197.15" y="361.58" width="5.74" height="40.02" fill="#73bf8d"/>
<rect x="1197.15" y="360.58" width="5.74" height="1" fill="#6f9be6"/>
<rect x="1197.15" y="319.70" width="5.74" height="40.88" fill="#8d6a2d"/>
<rect x="1205.70" y="349.12" width="5.74" height="52.48" fill="#73bf8d"/>
<rect x="1205.70" y="348.12" width="5.74" height="1" fill="#6f9be6"/>
<rect x="1205.70" y="312.18" width="5.74" height="35.94" fill="#8d6a2d"/>
<rect x="1214.25" y="347.62" width="5.74" height="53.98" fill="#73bf8d"/>
<rect x="1214.25" y="346.62" width="5.74" height="1" fill="#6f9be6"/>
<rect x="1214.25" y="311.75" width="5.74" height="34.87" fill="#8d6a2d"/>
<rect x="1222.81" y="350.41" width="5.74" height="51.19" fill="#73bf8d"/>
<rect x="1222.81" y="349.41" width="5.74" height="1" fill="#6f9be6"/>
<rect x="1222.81" y="313.90" width="5.74" height="35.51" fill="#8d6a2d"/>
<rect x="1231.36" y="349.77" width="5.74" height="51.83" fill="#73bf8d"/>
<rect x="1231.36" y="348.77" width="5.74" height="1" fill="#6f9be6"/>
<rect x="1231.36" y="313.26" width="5.74" height="35.51" fill="#8d6a2d"/>
<rect x="1239.91" y="341.61" width="5.74" height="59.99" fill="#73bf8d"/>
<rect x="1239.91" y="340.61" width="5.74" height="1" fill="#6f9be6"/>
<rect x="1239.91" y="300.37" width="5.74" height="40.24" fill="#8d6a2d"/>
<rect x="1248.47" y="348.26" width="5.74" height="53.34" fill="#73bf8d"/>
<rect x="1248.47" y="347.26" width="5.74" height="1" fill="#6f9be6"/>
<rect x="1248.47" y="312.18" width="5.74" height="35.08" fill="#8d6a2d"/>
<rect x="1257.02" y="366.31" width="5.74" height="35.29" fill="#73bf8d"/>
<rect x="1257.02" y="365.31" width="5.74" height="1" fill="#6f9be6"/>
<rect x="1257.02" y="321.85" width="5.74" height="43.46" fill="#8d6a2d"/>
<rect x="1265.57" y="348.26" width="5.74" height="53.34" fill="#73bf8d"/>
<rect x="1265.57" y="347.26" width="5.74" height="1" fill="#6f9be6"/>
<rect x="1265.57" y="311.75" width="5.74" height="35.51" fill="#8d6a2d"/>
<rect x="1274.13" y="349.77" width="5.74" height="51.83" fill="#73bf8d"/>
<rect x="1274.13" y="348.77" width="5.74" height="1" fill="#6f9be6"/>
<rect x="1274.13" y="312.83" width="5.74" height="35.94" fill="#8d6a2d"/>
<rect x="1282.68" y="349.12" width="5.74" height="52.48" fill="#73bf8d"/>
<rect x="1282.68" y="348.12" width="5.74" height="1" fill="#6f9be6"/>
<rect x="1282.68" y="313.26" width="5.74" height="34.87" fill="#8d6a2d"/>
<rect x="1291.24" y="350.41" width="5.74" height="51.19" fill="#73bf8d"/>
<rect x="1291.24" y="349.41" width="5.74" height="1" fill="#6f9be6"/>
<rect x="1291.24" y="313.90" width="5.74" height="35.51" fill="#8d6a2d"/>
<rect x="1299.79" y="349.12" width="5.74" height="52.48" fill="#73bf8d"/>
<rect x="1299.79" y="348.12" width="5.74" height="1" fill="#6f9be6"/>
<rect x="1299.79" y="311.75" width="5.74" height="36.37" fill="#8d6a2d"/>
<rect x="1308.34" y="348.05" width="5.74" height="53.55" fill="#73bf8d"/>
<rect x="1308.34" y="347.05" width="5.74" height="1" fill="#6f9be6"/>
<rect x="1308.34" y="311.11" width="5.74" height="35.94" fill="#8d6a2d"/>
<rect x="1316.90" y="360.51" width="5.74" height="41.09" fill="#73bf8d"/>
<rect x="1316.90" y="359.51" width="5.74" height="1" fill="#6f9be6"/>
<rect x="1316.90" y="319.70" width="5.74" height="39.81" fill="#8d6a2d"/>
<rect x="1325.45" y="356.64" width="5.74" height="44.96" fill="#73bf8d"/>
<rect x="1325.45" y="355.64" width="5.74" height="1" fill="#6f9be6"/>
<rect x="1325.45" y="317.34" width="5.74" height="38.30" fill="#8d6a2d"/>
<rect x="1334.00" y="348.69" width="5.74" height="52.91" fill="#73bf8d"/>
<rect x="1334.00" y="347.69" width="5.74" height="1" fill="#6f9be6"/>
<rect x="1334.00" y="312.18" width="5.74" height="35.51" fill="#8d6a2d"/>
<rect x="1342.56" y="349.12" width="5.74" height="52.48" fill="#73bf8d"/>
<rect x="1342.56" y="348.12" width="5.74" height="1" fill="#6f9be6"/>
<rect x="1342.56" y="312.83" width="5.74" height="35.30" fill="#8d6a2d"/>
<rect x="1351.11" y="350.20" width="5.74" height="51.40" fill="#73bf8d"/>
<rect x="1351.11" y="349.20" width="5.74" height="1" fill="#6f9be6"/>
<rect x="1351.11" y="313.90" width="5.74" height="35.30" fill="#8d6a2d"/>
<rect x="1359.66" y="349.77" width="5.74" height="51.83" fill="#73bf8d"/>
<rect x="1359.66" y="348.77" width="5.74" height="1" fill="#6f9be6"/>
<rect x="1359.66" y="312.83" width="5.74" height="35.94" fill="#8d6a2d"/>
<rect x="1368.22" y="347.19" width="5.74" height="54.41" fill="#73bf8d"/>
<rect x="1368.22" y="346.19" width="5.74" height="1" fill="#6f9be6"/>
<rect x="1368.22" y="311.75" width="5.74" height="34.44" fill="#8d6a2d"/>
<rect x="1376.77" y="341.61" width="5.74" height="59.99" fill="#73bf8d"/>
<rect x="1376.77" y="340.61" width="5.74" height="1" fill="#6f9be6"/>
<rect x="1376.77" y="300.80" width="5.74" height="39.81" fill="#8d6a2d"/>
<rect x="1385.33" y="364.16" width="5.74" height="37.44" fill="#73bf8d"/>
<rect x="1385.33" y="363.16" width="5.74" height="1" fill="#6f9be6"/>
<rect x="1385.33" y="320.77" width="5.74" height="42.38" fill="#8d6a2d"/>
<rect x="1393.88" y="348.69" width="5.74" height="52.91" fill="#73bf8d"/>
<rect x="1393.88" y="347.69" width="5.74" height="1" fill="#6f9be6"/>
<rect x="1393.88" y="312.61" width="5.74" height="35.08" fill="#8d6a2d"/>
<rect x="1402.43" y="348.26" width="5.74" height="53.34" fill="#73bf8d"/>
<rect x="1402.43" y="347.26" width="5.74" height="1" fill="#6f9be6"/>
<rect x="1402.43" y="312.18" width="5.74" height="35.08" fill="#8d6a2d"/>
<rect x="1410.99" y="349.77" width="5.74" height="51.83" fill="#73bf8d"/>
<rect x="1410.99" y="348.77" width="5.74" height="1" fill="#6f9be6"/>
<rect x="1410.99" y="313.26" width="5.74" height="35.51" fill="#8d6a2d"/>
<rect x="1419.54" y="350.41" width="5.74" height="51.19" fill="#73bf8d"/>
<rect x="1419.54" y="349.41" width="5.74" height="1" fill="#6f9be6"/>
<rect x="1419.54" y="314.97" width="5.74" height="34.44" fill="#8d6a2d"/>
<rect x="1428.09" y="348.26" width="5.74" height="53.34" fill="#73bf8d"/>
<rect x="1428.09" y="347.26" width="5.74" height="1" fill="#6f9be6"/>
<rect x="1428.09" y="312.18" width="5.74" height="35.08" fill="#8d6a2d"/>
<rect x="1436.65" y="364.80" width="5.74" height="36.80" fill="#73bf8d"/>
<rect x="1436.65" y="363.80" width="5.74" height="1" fill="#6f9be6"/>
<rect x="1436.65" y="321.85" width="5.74" height="41.96" fill="#8d6a2d"/>
<rect x="1445.20" y="348.26" width="5.74" height="53.34" fill="#73bf8d"/>
<rect x="1445.20" y="347.26" width="5.74" height="1" fill="#6f9be6"/>
<rect x="1445.20" y="312.18" width="5.74" height="35.08" fill="#8d6a2d"/>
<rect x="1453.75" y="347.62" width="5.74" height="53.98" fill="#73bf8d"/>
<rect x="1453.75" y="346.62" width="5.74" height="1" fill="#6f9be6"/>
<rect x="1453.75" y="312.18" width="5.74" height="34.44" fill="#8d6a2d"/>
<rect x="1462.31" y="350.41" width="5.74" height="51.19" fill="#73bf8d"/>
<rect x="1462.31" y="349.41" width="5.74" height="1" fill="#6f9be6"/>
<rect x="1462.31" y="313.90" width="5.74" height="35.51" fill="#8d6a2d"/>
<rect x="1470.86" y="350.41" width="5.74" height="51.19" fill="#73bf8d"/>
<rect x="1470.86" y="349.41" width="5.74" height="1" fill="#6f9be6"/>
<rect x="1470.86" y="313.90" width="5.74" height="35.51" fill="#8d6a2d"/>
<rect x="1479.41" y="349.34" width="5.74" height="52.26" fill="#73bf8d"/>
<rect x="1479.41" y="348.34" width="5.74" height="1" fill="#6f9be6"/>
<rect x="1479.41" y="312.83" width="5.74" height="35.51" fill="#8d6a2d"/>
<rect x="1487.97" y="346.98" width="5.74" height="54.62" fill="#73bf8d"/>
<rect x="1487.97" y="345.98" width="5.74" height="1" fill="#6f9be6"/>
<rect x="1487.97" y="311.11" width="5.74" height="34.87" fill="#8d6a2d"/>
<rect x="1496.52" y="363.30" width="5.74" height="38.30" fill="#73bf8d"/>
<rect x="1496.52" y="362.30" width="5.74" height="1" fill="#6f9be6"/>
<rect x="1496.52" y="320.77" width="5.74" height="41.53" fill="#8d6a2d"/>
<rect x="1505.08" y="351.92" width="5.74" height="49.68" fill="#73bf8d"/>
<rect x="1505.08" y="350.92" width="5.74" height="1" fill="#6f9be6"/>
<rect x="1505.08" y="313.90" width="5.74" height="37.02" fill="#8d6a2d"/>
<rect x="1513.63" y="341.18" width="5.74" height="60.42" fill="#73bf8d"/>
<rect x="1513.63" y="340.18" width="5.74" height="1" fill="#6f9be6"/>
<rect x="1513.63" y="300.37" width="5.74" height="39.81" fill="#8d6a2d"/>
<rect x="1522.18" y="349.34" width="5.74" height="52.26" fill="#73bf8d"/>
<rect x="1522.18" y="348.34" width="5.74" height="1" fill="#6f9be6"/>
<rect x="1522.18" y="312.83" width="5.74" height="35.51" fill="#8d6a2d"/>
<rect x="1530.74" y="351.27" width="5.74" height="50.33" fill="#73bf8d"/>
<rect x="1530.74" y="350.27" width="5.74" height="1" fill="#6f9be6"/>
<rect x="1530.74" y="314.97" width="5.74" height="35.30" fill="#8d6a2d"/>
<rect x="1539.29" y="348.26" width="5.74" height="53.34" fill="#73bf8d"/>
<rect x="1539.29" y="347.26" width="5.74" height="1" fill="#6f9be6"/>
<rect x="1539.29" y="311.75" width="5.74" height="35.51" fill="#8d6a2d"/>
<rect x="1547.84" y="349.77" width="5.74" height="51.83" fill="#73bf8d"/>
<rect x="1547.84" y="348.77" width="5.74" height="1" fill="#6f9be6"/>
<rect x="1547.84" y="313.26" width="5.74" height="35.51" fill="#8d6a2d"/>
<rect x="1556.40" y="349.77" width="5.74" height="51.83" fill="#73bf8d"/>
<rect x="1556.40" y="348.77" width="5.74" height="1" fill="#6f9be6"/>
<rect x="1556.40" y="312.83" width="5.74" height="35.94" fill="#8d6a2d"/>
<rect x="1564.95" y="363.30" width="5.74" height="38.30" fill="#73bf8d"/>
<rect x="1564.95" y="362.30" width="5.74" height="1" fill="#6f9be6"/>
<rect x="1564.95" y="320.77" width="5.74" height="41.53" fill="#8d6a2d"/>
<rect x="1573.50" y="348.26" width="5.74" height="53.34" fill="#73bf8d"/>
<rect x="1573.50" y="347.26" width="5.74" height="1" fill="#6f9be6"/>
<rect x="1573.50" y="311.75" width="5.74" height="35.51" fill="#8d6a2d"/>
<rect x="1582.06" y="349.12" width="5.74" height="52.48" fill="#73bf8d"/>
<rect x="1582.06" y="348.12" width="5.74" height="1" fill="#6f9be6"/>
<rect x="1582.06" y="312.61" width="5.74" height="35.51" fill="#8d6a2d"/>
<rect x="1590.61" y="350.20" width="5.74" height="51.40" fill="#73bf8d"/>
<rect x="1590.61" y="349.20" width="5.74" height="1" fill="#6f9be6"/>
<rect x="1590.61" y="313.90" width="5.74" height="35.30" fill="#8d6a2d"/>
<rect x="1599.17" y="349.77" width="5.74" height="51.83" fill="#73bf8d"/>
<rect x="1599.17" y="348.77" width="5.74" height="1" fill="#6f9be6"/>
<rect x="1599.17" y="313.47" width="5.74" height="35.30" fill="#8d6a2d"/>
<rect x="1607.72" y="348.05" width="5.74" height="53.55" fill="#73bf8d"/>
<rect x="1607.72" y="347.05" width="5.74" height="1" fill="#6f9be6"/>
<rect x="1607.72" y="311.54" width="5.74" height="35.51" fill="#8d6a2d"/>
<rect x="1616.27" y="347.62" width="5.74" height="53.98" fill="#73bf8d"/>
<rect x="1616.27" y="346.62" width="5.74" height="1" fill="#6f9be6"/>
<rect x="1616.27" y="311.75" width="5.74" height="34.87" fill="#8d6a2d"/>
<rect x="1624.83" y="365.88" width="5.74" height="35.72" fill="#73bf8d"/>
<rect x="1624.83" y="364.88" width="5.74" height="1" fill="#6f9be6"/>
<rect x="1624.83" y="322.28" width="5.74" height="42.60" fill="#8d6a2d"/>
<rect x="1633.38" y="349.12" width="5.74" height="52.48" fill="#73bf8d"/>
<rect x="1633.38" y="348.12" width="5.74" height="1" fill="#6f9be6"/>
<rect x="1633.38" y="312.61" width="5.74" height="35.51" fill="#8d6a2d"/>
<rect x="1641.93" y="342.68" width="5.74" height="58.92" fill="#73bf8d"/>
<rect x="1641.93" y="341.68" width="5.74" height="1" fill="#6f9be6"/>
<rect x="1641.93" y="300.80" width="5.74" height="40.88" fill="#8d6a2d"/>
<rect x="1650.49" y="349.12" width="5.74" height="52.48" fill="#73bf8d"/>
<rect x="1650.49" y="348.12" width="5.74" height="1" fill="#6f9be6"/>
<rect x="1650.49" y="313.26" width="5.74" height="34.87" fill="#8d6a2d"/>
<rect x="1659.04" y="351.27" width="5.74" height="50.33" fill="#73bf8d"/>
<rect x="1659.04" y="350.27" width="5.74" height="1" fill="#6f9be6"/>
<rect x="1659.04" y="314.76" width="5.74" height="35.51" fill="#8d6a2d"/>
<rect x="1667.59" y="348.26" width="5.74" height="53.34" fill="#73bf8d"/>
<rect x="1667.59" y="347.26" width="5.74" height="1" fill="#6f9be6"/>
<rect x="1667.59" y="311.75" width="5.74" height="35.51" fill="#8d6a2d"/>
<rect x="1676.15" y="349.12" width="5.74" height="52.48" fill="#73bf8d"/>
<rect x="1676.15" y="348.12" width="5.74" height="1" fill="#6f9be6"/>
<rect x="1676.15" y="312.61" width="5.74" height="35.51" fill="#8d6a2d"/>
<rect x="1684.70" y="352.99" width="5.74" height="48.61" fill="#73bf8d"/>
<rect x="1684.70" y="351.99" width="5.74" height="1" fill="#6f9be6"/>
<rect x="1684.70" y="314.97" width="5.74" height="37.02" fill="#8d6a2d"/>
<rect x="1693.25" y="359.86" width="5.74" height="41.74" fill="#73bf8d"/>
<rect x="1693.25" y="358.86" width="5.74" height="1" fill="#6f9be6"/>
<rect x="1693.25" y="318.63" width="5.74" height="40.24" fill="#8d6a2d"/>
<rect x="1701.81" y="349.12" width="5.74" height="52.48" fill="#73bf8d"/>
<rect x="1701.81" y="348.12" width="5.74" height="1" fill="#6f9be6"/>
<rect x="1701.81" y="312.61" width="5.74" height="35.51" fill="#8d6a2d"/>
<rect x="1710.36" y="349.12" width="5.74" height="52.48" fill="#73bf8d"/>
<rect x="1710.36" y="348.12" width="5.74" height="1" fill="#6f9be6"/>
<rect x="1710.36" y="312.18" width="5.74" height="35.94" fill="#8d6a2d"/>
<rect x="1718.92" y="350.41" width="5.74" height="51.19" fill="#73bf8d"/>
<rect x="1718.92" y="349.41" width="5.74" height="1" fill="#6f9be6"/>
<rect x="1718.92" y="313.90" width="5.74" height="35.51" fill="#8d6a2d"/>
<rect x="1727.47" y="350.41" width="5.74" height="51.19" fill="#73bf8d"/>
<rect x="1727.47" y="349.41" width="5.74" height="1" fill="#6f9be6"/>
<rect x="1727.47" y="313.90" width="5.74" height="35.51" fill="#8d6a2d"/>
<rect x="1736.02" y="352.56" width="5.74" height="49.04" fill="#73bf8d"/>
<rect x="1736.02" y="351.56" width="5.74" height="1" fill="#6f9be6"/>
<rect x="1736.02" y="314.76" width="5.74" height="36.80" fill="#8d6a2d"/>
<rect x="1744.58" y="359.00" width="5.74" height="42.60" fill="#73bf8d"/>
<rect x="1744.58" y="358.00" width="5.74" height="1" fill="#6f9be6"/>
<rect x="1744.58" y="318.20" width="5.74" height="39.81" fill="#8d6a2d"/>
<rect x="1753.13" y="348.26" width="5.74" height="53.34" fill="#73bf8d"/>
<rect x="1753.13" y="347.26" width="5.74" height="1" fill="#6f9be6"/>
<rect x="1753.13" y="311.75" width="5.74" height="35.51" fill="#8d6a2d"/>
<rect x="1761.68" y="348.69" width="5.74" height="52.91" fill="#73bf8d"/>
<rect x="1761.68" y="347.69" width="5.74" height="1" fill="#6f9be6"/>
<rect x="1761.68" y="312.18" width="5.74" height="35.51" fill="#8d6a2d"/>
<rect x="1770.24" y="350.84" width="5.74" height="50.76" fill="#73bf8d"/>
<rect x="1770.24" y="349.84" width="5.74" height="1" fill="#6f9be6"/>
<rect x="1770.24" y="313.90" width="5.74" height="35.94" fill="#8d6a2d"/>
<rect x="1778.79" y="342.25" width="5.74" height="59.35" fill="#73bf8d"/>
<rect x="1778.79" y="341.25" width="5.74" height="1" fill="#6f9be6"/>
<rect x="1778.79" y="301.44" width="5.74" height="39.81" fill="#8d6a2d"/>
<rect x="1787.34" y="346.98" width="5.74" height="54.62" fill="#73bf8d"/>
<rect x="1787.34" y="345.98" width="5.74" height="1" fill="#6f9be6"/>
<rect x="1787.34" y="310.68" width="5.74" height="35.30" fill="#8d6a2d"/>
<rect x="1795.90" y="348.26" width="5.74" height="53.34" fill="#73bf8d"/>
<rect x="1795.90" y="347.26" width="5.74" height="1" fill="#6f9be6"/>
<rect x="1795.90" y="312.18" width="5.74" height="35.08" fill="#8d6a2d"/>
<rect x="1804.45" y="366.95" width="5.74" height="34.65" fill="#73bf8d"/>
<rect x="1804.45" y="365.95" width="5.74" height="1" fill="#6f9be6"/>
<rect x="1804.45" y="322.49" width="5.74" height="43.46" fill="#8d6a2d"/>
<rect x="1813.01" y="348.26" width="5.74" height="53.34" fill="#73bf8d"/>
<rect x="1813.01" y="347.26" width="5.74" height="1" fill="#6f9be6"/>
<rect x="1813.01" y="311.75" width="5.74" height="35.51" fill="#8d6a2d"/>
<rect x="1821.56" y="349.77" width="5.74" height="51.83" fill="#73bf8d"/>
<rect x="1821.56" y="348.77" width="5.74" height="1" fill="#6f9be6"/>
<rect x="1821.56" y="312.83" width="5.74" height="35.94" fill="#8d6a2d"/>
<rect x="1830.11" y="348.69" width="5.74" height="52.91" fill="#73bf8d"/>
<rect x="1830.11" y="347.69" width="5.74" height="1" fill="#6f9be6"/>
<rect x="1830.11" y="312.18" width="5.74" height="35.51" fill="#8d6a2d"/>
<rect x="1838.67" y="350.41" width="5.74" height="51.19" fill="#73bf8d"/>
<rect x="1838.67" y="349.41" width="5.74" height="1" fill="#6f9be6"/>
<rect x="1838.67" y="313.69" width="5.74" height="35.73" fill="#8d6a2d"/>
<rect x="1847.22" y="349.12" width="5.74" height="52.48" fill="#73bf8d"/>
<rect x="1847.22" y="348.12" width="5.74" height="1" fill="#6f9be6"/>
<rect x="1847.22" y="312.18" width="5.74" height="35.94" fill="#8d6a2d"/>
<rect x="1855.77" y="347.62" width="5.74" height="53.98" fill="#73bf8d"/>
<rect x="1855.77" y="346.62" width="5.74" height="1" fill="#6f9be6"/>
<rect x="1855.77" y="311.75" width="5.74" height="34.87" fill="#8d6a2d"/>
<rect x="1864.33" y="357.93" width="5.74" height="43.67" fill="#73bf8d"/>
<rect x="1864.33" y="356.93" width="5.74" height="1" fill="#6f9be6"/>
<rect x="1864.33" y="317.55" width="5.74" height="39.38" fill="#8d6a2d"/>
<rect x="1872.88" y="355.78" width="5.74" height="45.82" fill="#73bf8d"/>
<rect x="1872.88" y="354.78" width="5.74" height="1" fill="#6f9be6"/>
<rect x="1872.88" y="315.83" width="5.74" height="38.95" fill="#8d6a2d"/>
<rect x="1881.43" y="348.26" width="5.74" height="53.34" fill="#73bf8d"/>
<rect x="1881.43" y="347.26" width="5.74" height="1" fill="#6f9be6"/>
<rect x="1881.43" y="311.75" width="5.74" height="35.51" fill="#8d6a2d"/>
<rect x="1889.99" y="349.34" width="5.74" height="52.26" fill="#73bf8d"/>
<rect x="1889.99" y="348.34" width="5.74" height="1" fill="#6f9be6"/>
<rect x="1889.99" y="312.61" width="5.74" height="35.73" fill="#8d6a2d"/>
<rect x="1898.54" y="349.34" width="5.74" height="52.26" fill="#73bf8d"/>
<rect x="1898.54" y="348.34" width="5.74" height="1" fill="#6f9be6"/>
<rect x="1898.54" y="313.26" width="5.74" height="35.08" fill="#8d6a2d"/>
<rect x="1907.09" y="349.34" width="5.74" height="52.26" fill="#73bf8d"/>
<rect x="1907.09" y="348.34" width="5.74" height="1" fill="#6f9be6"/>
<rect x="1907.09" y="312.83" width="5.74" height="35.51" fill="#8d6a2d"/>
<rect x="1915.65" y="341.18" width="5.74" height="60.42" fill="#73bf8d"/>
<rect x="1915.65" y="340.18" width="5.74" height="1" fill="#6f9be6"/>
<rect x="1915.65" y="300.80" width="5.74" height="39.38" fill="#8d6a2d"/>
<rect x="1924.20" y="346.98" width="5.74" height="54.62" fill="#73bf8d"/>
<rect x="1924.20" y="345.98" width="5.74" height="1" fill="#6f9be6"/>
<rect x="1924.20" y="310.68" width="5.74" height="35.30" fill="#8d6a2d"/>
<rect x="1932.76" y="364.64" width="5.74" height="36.96" fill="#73bf8d"/>
<rect x="1932.76" y="363.64" width="5.74" height="1" fill="#6f9be6"/>
<rect x="1932.76" y="321.25" width="5.74" height="42.39" fill="#8d6a2d"/>
<rect x="1941.31" y="348.04" width="5.74" height="53.56" fill="#73bf8d"/>
<rect x="1941.31" y="347.04" width="5.74" height="1" fill="#6f9be6"/>
<rect x="1941.31" y="311.43" width="5.74" height="35.61" fill="#8d6a2d"/>
<rect x="1949.86" y="348.93" width="5.74" height="52.67" fill="#73bf8d"/>
<rect x="1949.86" y="347.93" width="5.74" height="1" fill="#6f9be6"/>
<rect x="1949.86" y="312.50" width="5.74" height="35.43" fill="#8d6a2d"/>
<rect x="1958.42" y="350.36" width="5.74" height="51.24" fill="#73bf8d"/>
<rect x="1958.42" y="349.36" width="5.74" height="1" fill="#6f9be6"/>
<rect x="1958.42" y="313.39" width="5.74" height="35.96" fill="#8d6a2d"/>
<rect x="1966.97" y="350.36" width="5.74" height="51.24" fill="#73bf8d"/>
<rect x="1966.97" y="349.36" width="5.74" height="1" fill="#6f9be6"/>
<rect x="1966.97" y="313.39" width="5.74" height="35.96" fill="#8d6a2d"/>
<rect x="1975.52" y="347.68" width="5.74" height="53.92" fill="#73bf8d"/>
<rect x="1975.52" y="346.68" width="5.74" height="1" fill="#6f9be6"/>
<rect x="1975.52" y="311.07" width="5.74" height="35.61" fill="#8d6a2d"/>
<rect x="1984.08" y="348.04" width="5.74" height="53.56" fill="#73bf8d"/>
<rect x="1984.08" y="347.04" width="5.74" height="1" fill="#6f9be6"/>
<rect x="1984.08" y="311.96" width="5.74" height="35.07" fill="#8d6a2d"/>
<rect x="1992.63" y="361.61" width="5.74" height="39.99" fill="#73bf8d"/>
<rect x="1992.63" y="360.61" width="5.74" height="1" fill="#6f9be6"/>
<rect x="1992.63" y="320.00" width="5.74" height="40.61" fill="#8d6a2d"/>
<rect x="2001.18" y="350.89" width="5.74" height="50.71" fill="#73bf8d"/>
<rect x="2001.18" y="349.89" width="5.74" height="1" fill="#6f9be6"/>
<rect x="2001.18" y="313.39" width="5.74" height="36.50" fill="#8d6a2d"/>
<rect x="2009.74" y="347.68" width="5.74" height="53.92" fill="#73bf8d"/>
<rect x="2009.74" y="346.68" width="5.74" height="1" fill="#6f9be6"/>
<rect x="2009.74" y="311.43" width="5.74" height="35.25" fill="#8d6a2d"/>
<rect x="2018.29" y="348.93" width="5.74" height="52.67" fill="#73bf8d"/>
<rect x="2018.29" y="347.93" width="5.74" height="1" fill="#6f9be6"/>
<rect x="2018.29" y="312.32" width="5.74" height="35.61" fill="#8d6a2d"/>
<rect x="2026.85" y="350.00" width="5.74" height="51.60" fill="#73bf8d"/>
<rect x="2026.85" y="349.00" width="5.74" height="1" fill="#6f9be6"/>
<rect x="2026.85" y="313.21" width="5.74" height="35.79" fill="#8d6a2d"/>
<rect x="2035.40" y="348.93" width="5.74" height="52.67" fill="#73bf8d"/>
<rect x="2035.40" y="347.93" width="5.74" height="1" fill="#6f9be6"/>
<rect x="2035.40" y="312.50" width="5.74" height="35.43" fill="#8d6a2d"/>
<rect x="2043.95" y="358.75" width="5.74" height="42.85" fill="#73bf8d"/>
<rect x="2043.95" y="357.75" width="5.74" height="1" fill="#6f9be6"/>
<rect x="2043.95" y="315.18" width="5.74" height="42.57" fill="#8d6a2d"/>
<rect x="2052.51" y="345.89" width="5.74" height="55.71" fill="#73bf8d"/>
<rect x="2052.51" y="344.89" width="5.74" height="1" fill="#6f9be6"/>
<rect x="2052.51" y="308.75" width="5.74" height="36.14" fill="#8d6a2d"/>
<rect x="2061.06" y="346.79" width="5.74" height="54.81" fill="#73bf8d"/>
<rect x="2061.06" y="345.79" width="5.74" height="1" fill="#6f9be6"/>
<rect x="2061.06" y="311.07" width="5.74" height="34.71" fill="#8d6a2d"/>
<rect x="2069.61" y="347.68" width="5.74" height="53.92" fill="#73bf8d"/>
<rect x="2069.61" y="346.68" width="5.74" height="1" fill="#6f9be6"/>
<rect x="2069.61" y="311.61" width="5.74" height="35.07" fill="#8d6a2d"/>
<rect x="2078.17" y="348.93" width="5.74" height="52.67" fill="#73bf8d"/>
<rect x="2078.17" y="347.93" width="5.74" height="1" fill="#6f9be6"/>
<rect x="2078.17" y="311.43" width="5.74" height="36.50" fill="#8d6a2d"/>
<rect x="2086.72" y="348.04" width="5.74" height="53.56" fill="#73bf8d"/>
<rect x="2086.72" y="347.04" width="5.74" height="1" fill="#6f9be6"/>
<rect x="2086.72" y="311.96" width="5.74" height="35.07" fill="#8d6a2d"/>
<rect x="2095.27" y="348.21" width="5.74" height="53.39" fill="#73bf8d"/>
<rect x="2095.27" y="347.21" width="5.74" height="1" fill="#6f9be6"/>
<rect x="2095.27" y="311.96" width="5.74" height="35.25" fill="#8d6a2d"/>
<rect x="2103.83" y="350.89" width="5.74" height="50.71" fill="#73bf8d"/>
<rect x="2103.83" y="349.89" width="5.74" height="1" fill="#6f9be6"/>
<rect x="2103.83" y="312.32" width="5.74" height="37.57" fill="#8d6a2d"/>
<rect x="2112.38" y="361.43" width="5.74" height="40.17" fill="#73bf8d"/>
<rect x="2112.38" y="360.43" width="5.74" height="1" fill="#6f9be6"/>
<rect x="2112.38" y="319.29" width="5.74" height="41.14" fill="#8d6a2d"/>
<rect x="2120.93" y="348.21" width="5.74" height="53.39" fill="#73bf8d"/>
<rect x="2120.93" y="347.21" width="5.74" height="1" fill="#6f9be6"/>
<rect x="2120.93" y="311.96" width="5.74" height="35.25" fill="#8d6a2d"/>
<rect x="2129.49" y="346.79" width="5.74" height="54.81" fill="#73bf8d"/>
<rect x="2129.49" y="345.79" width="5.74" height="1" fill="#6f9be6"/>
<rect x="2129.49" y="309.64" width="5.74" height="36.14" fill="#8d6a2d"/>
<rect x="2138.04" y="349.46" width="5.74" height="52.14" fill="#73bf8d"/>
<rect x="2138.04" y="348.46" width="5.74" height="1" fill="#6f9be6"/>
<rect x="2138.04" y="313.21" width="5.74" height="35.25" fill="#8d6a2d"/>
<rect x="2146.60" y="349.82" width="5.74" height="51.78" fill="#73bf8d"/>
<rect x="2146.60" y="348.82" width="5.74" height="1" fill="#6f9be6"/>
<rect x="2146.60" y="313.21" width="5.74" height="35.61" fill="#8d6a2d"/>
<rect x="2155.15" y="345.89" width="5.74" height="55.71" fill="#73bf8d"/>
<rect x="2155.15" y="344.89" width="5.74" height="1" fill="#6f9be6"/>
<rect x="2155.15" y="309.29" width="5.74" height="35.61" fill="#8d6a2d"/>
<rect x="2163.70" y="347.68" width="5.74" height="53.92" fill="#73bf8d"/>
<rect x="2163.70" y="346.68" width="5.74" height="1" fill="#6f9be6"/>
<rect x="2163.70" y="311.25" width="5.74" height="35.43" fill="#8d6a2d"/>
<rect x="2172.26" y="367.32" width="5.74" height="34.28" fill="#73bf8d"/>
<rect x="2172.26" y="366.32" width="5.74" height="1" fill="#6f9be6"/>
<rect x="2172.26" y="323.57" width="5.74" height="42.75" fill="#8d6a2d"/>
<rect x="2180.81" y="348.21" width="5.74" height="53.39" fill="#73bf8d"/>
<rect x="2180.81" y="347.21" width="5.74" height="1" fill="#6f9be6"/>
<rect x="2180.81" y="311.96" width="5.74" height="35.25" fill="#8d6a2d"/>
<rect x="2189.36" y="347.14" width="5.74" height="54.46" fill="#73bf8d"/>
<rect x="2189.36" y="346.14" width="5.74" height="1" fill="#6f9be6"/>
<rect x="2189.36" y="309.82" width="5.74" height="36.32" fill="#8d6a2d"/>
<rect x="2197.92" y="349.82" width="5.74" height="51.78" fill="#73bf8d"/>
<rect x="2197.92" y="348.82" width="5.74" height="1" fill="#6f9be6"/>
<rect x="2197.92" y="313.21" width="5.74" height="35.61" fill="#8d6a2d"/>
<rect x="2206.47" y="349.82" width="5.74" height="51.78" fill="#73bf8d"/>
<rect x="2206.47" y="348.82" width="5.74" height="1" fill="#6f9be6"/>
<rect x="2206.47" y="313.75" width="5.74" height="35.07" fill="#8d6a2d"/>
<rect x="2215.02" y="346.43" width="5.74" height="55.17" fill="#73bf8d"/>
<rect x="2215.02" y="345.43" width="5.74" height="1" fill="#6f9be6"/>
<rect x="2215.02" y="309.29" width="5.74" height="36.14" fill="#8d6a2d"/>
<rect x="2223.58" y="347.68" width="5.74" height="53.92" fill="#73bf8d"/>
<rect x="2223.58" y="346.68" width="5.74" height="1" fill="#6f9be6"/>
<rect x="2223.58" y="311.25" width="5.74" height="35.43" fill="#8d6a2d"/>
<rect x="2232.13" y="354.82" width="5.74" height="46.78" fill="#73bf8d"/>
<rect x="2232.13" y="353.82" width="5.74" height="1" fill="#6f9be6"/>
<rect x="2232.13" y="315.89" width="5.74" height="37.93" fill="#8d6a2d"/>
<rect x="2240.69" y="356.61" width="5.74" height="44.99" fill="#73bf8d"/>
<rect x="2240.69" y="355.61" width="5.74" height="1" fill="#6f9be6"/>
<rect x="2240.69" y="315.18" width="5.74" height="40.43" fill="#8d6a2d"/>
<rect x="2249.24" y="348.04" width="5.74" height="53.56" fill="#73bf8d"/>
<rect x="2249.24" y="347.04" width="5.74" height="1" fill="#6f9be6"/>
<rect x="2249.24" y="311.43" width="5.74" height="35.61" fill="#8d6a2d"/>
<rect x="2257.79" y="348.04" width="5.74" height="53.56" fill="#73bf8d"/>
<rect x="2257.79" y="347.04" width="5.74" height="1" fill="#6f9be6"/>
<rect x="2257.79" y="311.96" width="5.74" height="35.07" fill="#8d6a2d"/>
<rect x="2266.35" y="348.93" width="5.74" height="52.67" fill="#73bf8d"/>
<rect x="2266.35" y="347.93" width="5.74" height="1" fill="#6f9be6"/>
<rect x="2266.35" y="311.96" width="5.74" height="35.96" fill="#8d6a2d"/>
<rect x="2274.90" y="348.57" width="5.74" height="53.03" fill="#73bf8d"/>
<rect x="2274.90" y="347.57" width="5.74" height="1" fill="#6f9be6"/>
<rect x="2274.90" y="312.86" width="5.74" height="34.71" fill="#8d6a2d"/>
<rect x="2283.45" y="348.04" width="5.74" height="53.56" fill="#73bf8d"/>
<rect x="2283.45" y="347.04" width="5.74" height="1" fill="#6f9be6"/>
<rect x="2283.45" y="311.96" width="5.74" height="35.07" fill="#8d6a2d"/>
<line x1="152.2" y1="401.6" x2="2290.6" y2="401.6" stroke="#6b7785" stroke-width="1.6"/>
<line x1="258.6" y1="401.6" x2="258.6" y2="408.6" stroke="#6b7785" stroke-width="1.5"/>
<line x1="564.3" y1="401.6" x2="564.3" y2="408.6" stroke="#6b7785" stroke-width="1.5"/>
<line x1="870.1" y1="401.6" x2="870.1" y2="408.6" stroke="#6b7785" stroke-width="1.5"/>
<line x1="1175.8" y1="401.6" x2="1175.8" y2="408.6" stroke="#6b7785" stroke-width="1.5"/>
<line x1="1481.5" y1="401.6" x2="1481.5" y2="408.6" stroke="#6b7785" stroke-width="1.5"/>
<line x1="1787.2" y1="401.6" x2="1787.2" y2="408.6" stroke="#6b7785" stroke-width="1.5"/>
<line x1="2093.0" y1="401.6" x2="2093.0" y2="408.6" stroke="#6b7785" stroke-width="1.5"/>
<line x1="150.6" y1="804.1" x2="758.7" y2="804.1" stroke="#e3e8ec" stroke-width="1.3" stroke-dasharray="5.8 3.2" stroke-dashoffset="-1"/>
<line x1="150.6" y1="1026.1" x2="758.7" y2="1026.1" stroke="#e3e8ec" stroke-width="1.3" stroke-dasharray="5.8 3.2" stroke-dashoffset="-1"/>
<line x1="150.6" y1="983.0" x2="758.7" y2="983.0" stroke="#e3e8ec" stroke-width="1.3" stroke-dasharray="5.8 3.2" stroke-dashoffset="-1"/>
<line x1="150.6" y1="939.8" x2="758.7" y2="939.8" stroke="#e3e8ec" stroke-width="1.3" stroke-dasharray="5.8 3.2" stroke-dashoffset="-1"/>
<line x1="150.6" y1="896.7" x2="758.7" y2="896.7" stroke="#e3e8ec" stroke-width="1.3" stroke-dasharray="5.8 3.2" stroke-dashoffset="-1"/>
<line x1="150.6" y1="853.6" x2="758.7" y2="853.6" stroke="#e3e8ec" stroke-width="1.3" stroke-dasharray="5.8 3.2" stroke-dashoffset="-1"/>
<line x1="150.6" y1="810.5" x2="758.7" y2="810.5" stroke="#e3e8ec" stroke-width="1.3" stroke-dasharray="5.8 3.2" stroke-dashoffset="-1"/>
<line x1="150.6" y1="1069.2" x2="758.7" y2="1069.2" stroke="#6b7785" stroke-width="1.6"/>
<line x1="180.3" y1="1069.2" x2="180.3" y2="1076.2" stroke="#6b7785" stroke-width="1.5"/>
<line x1="267.4" y1="1069.2" x2="267.4" y2="1076.2" stroke="#6b7785" stroke-width="1.5"/>
<line x1="354.4" y1="1069.2" x2="354.4" y2="1076.2" stroke="#6b7785" stroke-width="1.5"/>
<line x1="441.5" y1="1069.2" x2="441.5" y2="1076.2" stroke="#6b7785" stroke-width="1.5"/>
<line x1="528.6" y1="1069.2" x2="528.6" y2="1076.2" stroke="#6b7785" stroke-width="1.5"/>
<line x1="615.6" y1="1069.2" x2="615.6" y2="1076.2" stroke="#6b7785" stroke-width="1.5"/>
<line x1="702.7" y1="1069.2" x2="702.7" y2="1076.2" stroke="#6b7785" stroke-width="1.5"/>
<path d="M150.6,1057.8 L153.0,1054.1 L155.5,1057.2 L157.9,1057.9 L160.4,1058.3 L162.8,1058.6 L165.3,1059.1 L167.7,1054.1 L170.1,1057.8 L172.6,1057.0 L175.0,1057.7 L177.5,1058.7 L179.9,1058.6 L182.3,1058.9 L184.8,1054.1 L187.2,1054.1 L189.7,1057.6 L192.1,1057.7 L194.6,1058.8 L197.0,1059.0 L199.4,1058.2 L201.9,1058.2 L204.3,1054.1 L206.8,1057.2 L209.2,1057.9 L211.7,1058.4 L214.1,1058.4 L216.5,1058.2 L219.0,1057.6 L221.4,1054.1 L223.9,1054.1 L226.3,1057.9 L228.7,1058.5 L231.2,1058.8 L233.6,1058.4 L236.1,1058.1 L238.5,1054.1 L241.0,1054.1 L243.4,1057.2 L245.8,1058.6 L248.3,1058.9 L250.7,1058.1 L253.2,1054.1 L255.6,1054.1 L258.1,1056.9 L260.5,1057.7 L262.9,1058.3 L265.4,1058.7 L267.8,1058.5 L270.3,1057.5 L272.7,1054.1 L275.2,1056.6 L277.6,1057.9 L280.0,1058.0 L282.5,1058.9 L284.9,1057.9 L287.4,1057.3 L289.8,1054.1 L292.2,1054.1 L294.7,1057.3 L297.1,1058.1 L299.6,1058.4 L302.0,1058.0 L304.5,1057.4 L306.9,1057.2 L309.3,1054.1 L311.8,1057.2 L314.2,1057.7 L316.7,1058.6 L319.1,1058.4 L321.6,1057.5 L324.0,1056.7 L326.4,1054.1 L328.9,1054.1 L331.3,1058.3 L333.8,1058.1 L336.2,1058.3 L338.6,1057.5 L341.1,1054.1 L343.5,1054.1 L346.0,1057.6 L348.4,1058.4 L350.9,1058.5 L353.3,1058.3 L355.7,1057.0 L358.2,1057.0 L360.6,1054.1 L363.1,1056.8 L365.5,1058.0 L368.0,1058.3 L370.4,1058.1 L372.8,1057.2 L375.3,1056.7 L377.7,1054.1 L380.2,1054.1 L382.6,1057.5 L385.0,1057.9 L387.5,1057.9 L389.9,1056.9 L392.4,1056.3 L394.8,1054.1 L397.3,1054.1 L399.7,1057.5 L402.1,1058.2 L404.6,1057.8 L407.0,1057.4 L409.5,1056.6 L411.9,1056.8 L414.4,1054.1 L416.8,1057.8 L419.2,1058.3 L421.7,1057.5 L424.1,1056.7 L426.6,1056.5 L429.0,1054.1 L431.4,1057.0 L433.9,1057.7 L436.3,1058.4 L438.8,1057.7 L441.2,1056.9 L443.7,1056.3 L446.1,1054.1 L448.5,1054.1 L451.0,1057.3 L453.4,1058.2 L455.9,1057.9 L458.3,1057.1 L460.8,1056.4 L463.2,1056.7 L465.6,1054.1 L468.1,1057.6 L470.5,1058.0 L473.0,1057.8 L475.4,1056.7 L477.9,1055.9 L480.3,1056.0 L482.7,1054.1 L485.2,1054.1 L487.6,1058.1 L490.1,1057.8 L492.5,1056.4 L494.9,1056.0 L497.4,1056.1 L499.8,1057.2 L502.3,1054.1 L504.7,1058.1 L507.2,1057.3 L509.6,1056.9 L512.0,1055.8 L514.5,1056.5 L516.9,1054.1 L519.4,1057.5 L521.8,1057.6 L524.3,1057.0 L526.7,1056.3 L529.1,1056.3 L531.6,1055.8 L534.0,1054.1 L536.5,1054.1 L538.9,1057.4 L541.3,1057.0 L543.8,1056.5 L546.2,1055.8 L548.7,1056.1 L551.1,1054.1 L553.6,1054.1 L556.0,1057.8 L558.4,1057.3 L560.9,1056.3 L563.3,1055.7 L565.8,1055.6 L568.2,1056.4 L570.7,1054.1 L573.1,1057.9 L575.5,1057.0 L578.0,1056.2 L580.4,1054.1 L582.9,1055.7 L585.3,1056.9 L587.7,1054.1 L590.2,1054.1 L592.6,1056.9 L595.1,1056.1 L597.5,1055.6 L600.0,1056.1 L602.4,1054.1 L604.8,1054.1 L607.3,1057.0 L609.7,1057.0 L612.2,1056.4 L614.6,1055.5 L617.1,1055.6 L619.5,1056.4 L621.9,1054.1 L624.4,1057.4 L626.8,1057.0 L629.3,1055.8 L631.7,1055.2 L634.1,1056.1 L636.6,1056.4 L639.0,1054.1 L641.5,1054.1 L643.9,1057.0 L646.4,1055.7 L648.8,1055.8 L651.2,1056.1 L653.7,1056.8 L656.1,1057.0 L658.6,1054.1 L661.0,1056.4 L663.5,1055.7 L665.9,1055.7 L668.3,1055.4 L670.8,1056.0 L673.2,1056.8 L675.7,1054.1 L678.1,1054.1 L680.6,1055.9 L683.0,1055.2 L685.4,1055.5 L687.9,1056.1 L690.3,1054.1 L692.8,1057.2 L695.2,1056.5 L697.6,1055.4 L700.1,1055.5 L702.5,1055.2 L705.0,1054.1 L707.4,1057.0 L709.9,1054.1 L712.3,1056.2 L714.7,1055.5 L717.2,1055.7 L719.6,1055.5 L722.1,1056.0 L724.5,1056.6 L727.0,1054.1 L729.4,1056.3 L731.8,1055.5 L734.3,1055.0 L736.7,1055.6 L739.2,1056.0 L741.6,1054.1 L744.0,1057.0 L746.5,1054.1 L748.9,1055.2 L751.4,1055.2 L753.8,1055.5 L756.3,1055.9 L758.7,1057.0" fill="none" stroke="#83554a" stroke-width="2.8" stroke-linejoin="round"/>
<path d="M150.6,1054.4 L153.0,990.8 L155.5,1053.9 L157.9,1055.4 L160.4,1054.6 L162.8,1054.4 L165.3,1054.3 L167.7,970.9 L170.1,1054.2 L172.6,1055.0 L175.0,1054.8 L177.5,1055.0 L179.9,1053.9 L182.3,1053.6 L184.8,983.7 L187.2,977.6 L189.7,1054.5 L192.1,1054.5 L194.6,1054.5 L197.0,1053.1 L199.4,1054.1 L201.9,1055.3 L204.3,1004.2 L206.8,1054.8 L209.2,1054.0 L211.7,1053.7 L214.1,1054.1 L216.5,1055.0 L219.0,1054.9 L221.4,1016.9 L223.9,1019.6 L226.3,1053.5 L228.7,1053.8 L231.2,1054.9 L233.6,1054.8 L236.1,1055.1 L238.5,1016.3 L241.0,1010.2 L243.4,1053.4 L245.8,1054.8 L248.3,1054.3 L250.7,1055.0 L253.2,977.0 L255.6,977.0 L258.1,1053.5 L260.5,1054.3 L262.9,1055.0 L265.4,1055.1 L267.8,1054.4 L270.3,1052.7 L272.7,1004.2 L275.2,1055.2 L277.6,1054.2 L280.0,1054.7 L282.5,1053.5 L284.9,1052.9 L287.4,1053.6 L289.8,1016.3 L292.2,1016.3 L294.7,1054.3 L297.1,1054.1 L299.6,1053.5 L302.0,1053.4 L304.5,1054.4 L306.9,1054.3 L309.3,997.5 L311.8,1054.2 L314.2,1053.0 L316.7,1054.3 L319.1,1054.9 L321.6,1054.4 L324.0,1054.8 L326.4,1023.4 L328.9,1026.3 L331.3,1054.0 L333.8,1054.2 L336.2,1054.1 L338.6,1054.6 L341.1,1010.2 L343.5,1004.2 L346.0,1053.8 L348.4,1054.2 L350.9,1054.5 L353.3,1055.0 L355.7,1054.2 L358.2,1053.4 L360.6,1020.2 L363.1,1054.2 L365.5,1054.8 L368.0,1055.0 L370.4,1054.0 L372.8,1052.7 L375.3,1053.5 L377.7,1010.2 L380.2,1010.2 L382.6,1054.3 L385.0,1053.6 L387.5,1052.5 L389.9,1054.1 L392.4,1054.3 L394.8,996.9 L397.3,990.8 L399.7,1053.2 L402.1,1053.3 L404.6,1053.5 L407.0,1054.1 L409.5,1054.8 L411.9,1054.8 L414.4,970.9 L416.8,1052.4 L419.2,1054.2 L421.7,1054.6 L424.1,1054.4 L426.6,1054.6 L429.0,1026.8 L431.4,1052.3 L433.9,1054.0 L436.3,1054.3 L438.8,1054.3 L441.2,1054.3 L443.7,1053.9 L446.1,1010.2 L448.5,1010.2 L451.0,1054.0 L453.4,1054.5 L455.9,1053.9 L458.3,1053.9 L460.8,1052.6 L463.2,1053.6 L465.6,1010.6 L468.1,1054.6 L470.5,1054.4 L473.0,1053.7 L475.4,1052.6 L477.9,1053.6 L480.3,1054.0 L482.7,937.5 L485.2,937.5 L487.6,1053.7 L490.1,1053.0 L492.5,1053.8 L494.9,1054.3 L497.4,1054.5 L499.8,1053.7 L502.3,1020.6 L504.7,1053.0 L507.2,1054.2 L509.6,1054.1 L512.0,1054.5 L514.5,1053.8 L516.9,1004.1 L519.4,1052.8 L521.8,1053.8 L524.3,1054.0 L526.7,1054.2 L529.1,1054.5 L531.6,1053.6 L534.0,1003.2 L536.5,1003.2 L538.9,1053.6 L541.3,1053.7 L543.8,1053.8 L546.2,1052.7 L548.7,1052.3 L551.1,1003.8 L553.6,997.6 L556.0,1054.0 L558.4,1053.9 L560.9,1052.9 L563.3,1052.1 L565.8,1053.4 L568.2,1054.0 L570.7,1010.6 L573.1,1054.2 L575.5,1052.6 L578.0,1052.1 L580.4,1026.8 L582.9,1054.0 L585.3,1053.6 L587.7,1019.5 L590.2,1017.3 L592.6,1052.5 L595.1,1053.9 L597.5,1054.2 L600.0,1054.5 L602.4,1019.5 L604.8,1010.6 L607.3,1052.0 L609.7,1053.2 L612.2,1053.5 L614.6,1053.5 L617.1,1053.5 L619.5,1053.2 L621.9,990.8 L624.4,1054.0 L626.8,1054.0 L629.3,1054.0 L631.7,1053.4 L634.1,1053.0 L636.6,1052.2 L639.0,984.1 L641.5,990.3 L643.9,1054.2 L646.4,1053.5 L648.8,1053.2 L651.2,1052.3 L653.7,1054.1 L656.1,1053.8 L658.6,1004.1 L661.0,1053.6 L663.5,1053.1 L665.9,1052.2 L668.3,1053.9 L670.8,1053.7 L673.2,1053.8 L675.7,1010.6 L678.1,1016.2 L680.6,1052.3 L683.0,1053.8 L685.4,1054.1 L687.9,1054.0 L690.3,1023.7 L692.8,1052.4 L695.2,1052.2 L697.6,1053.2 L700.1,1053.5 L702.5,1053.9 L705.0,1003.8 L707.4,1052.7 L709.9,990.8 L712.3,1053.6 L714.7,1054.1 L717.2,1054.0 L719.6,1053.7 L722.1,1052.3 L724.5,1052.3 L727.0,984.1 L729.4,1054.2 L731.8,1053.5 L734.3,1054.0 L736.7,1052.2 L739.2,1051.8 L741.6,990.3 L744.0,1053.3 L746.5,971.1 L748.9,1053.4 L751.4,1052.3 L753.8,1052.0 L756.3,1054.0 L758.7,1053.8" fill="none" stroke="#4650d6" stroke-width="2.8" stroke-linejoin="round"/>
<path d="M150.6,1051.2 L153.0,963.3 L155.5,1049.3 L157.9,1050.7 L160.4,1051.6 L162.8,1051.7 L165.3,1050.8 L167.7,936.4 L170.1,1049.2 L172.6,1051.1 L175.0,1051.0 L177.5,1050.8 L179.9,1050.2 L182.3,1048.4 L184.8,953.6 L187.2,945.4 L189.7,1050.3 L192.1,1051.3 L194.6,1050.1 L197.0,1048.4 L199.4,1049.3 L201.9,1050.6 L204.3,981.3 L206.8,1051.3 L209.2,1051.1 L211.7,1048.4 L214.1,1049.1 L216.5,1050.4 L219.0,1051.2 L221.4,998.5 L223.9,1002.2 L226.3,1048.7 L228.7,1049.3 L231.2,1050.7 L233.6,1050.2 L236.1,1050.3 L238.5,997.7 L241.0,989.5 L243.4,1049.1 L245.8,1050.6 L248.3,1051.4 L250.7,1050.5 L253.2,944.6 L255.6,944.6 L258.1,1048.6 L260.5,1051.0 L262.9,1051.4 L265.4,1051.3 L267.8,1050.2 L270.3,1047.7 L272.7,981.3 L275.2,1051.3 L277.6,1050.4 L280.0,1050.4 L282.5,1050.5 L284.9,1048.1 L287.4,1048.3 L289.8,997.7 L292.2,997.7 L294.7,1050.2 L297.1,1050.0 L299.6,1048.0 L302.0,1047.9 L304.5,1050.7 L306.9,1050.6 L309.3,972.3 L311.8,1050.1 L314.2,1048.1 L316.7,1048.9 L319.1,1050.2 L321.6,1049.9 L324.0,1049.9 L326.4,1007.4 L328.9,1011.2 L331.3,1048.4 L333.8,1050.4 L336.2,1050.1 L338.6,1050.9 L341.1,989.5 L343.5,981.3 L346.0,1047.8 L348.4,1051.0 L350.9,1050.1 L353.3,1050.0 L355.7,1049.8 L358.2,1048.2 L360.6,1003.0 L363.1,1050.1 L365.5,1050.1 L368.0,1050.8 L370.4,1049.4 L372.8,1048.0 L375.3,1048.3 L377.7,989.5 L380.2,989.5 L382.6,1050.3 L385.0,1049.7 L387.5,1047.3 L389.9,1048.2 L392.4,1049.8 L394.8,971.5 L397.3,963.3 L399.7,1049.7 L402.1,1047.9 L404.6,1048.3 L407.0,1050.8 L409.5,1049.8 L411.9,1049.8 L414.4,936.4 L416.8,1047.4 L419.2,1047.8 L421.7,1050.1 L424.1,1049.9 L426.6,1050.0 L429.0,1011.9 L431.4,1047.1 L433.9,1048.3 L436.3,1050.1 L438.8,1049.4 L441.2,1049.6 L443.7,1048.9 L446.1,989.5 L448.5,989.5 L451.0,1050.1 L453.4,1050.1 L455.9,1049.8 L458.3,1048.7 L460.8,1047.8 L463.2,1048.5 L465.6,989.9 L468.1,1050.3 L470.5,1050.0 L473.0,1049.0 L475.4,1047.2 L477.9,1047.8 L480.3,1050.3 L482.7,891.2 L485.2,891.2 L487.6,1048.4 L490.1,1047.0 L492.5,1047.8 L494.9,1050.4 L497.4,1050.5 L499.8,1049.3 L502.3,1003.6 L504.7,1047.0 L507.2,1048.8 L509.6,1049.8 L512.0,1050.2 L514.5,1049.1 L516.9,981.2 L519.4,1046.8 L521.8,1048.3 L524.3,1050.4 L526.7,1050.2 L529.1,1049.9 L531.6,1048.6 L534.0,980.0 L536.5,980.0 L538.9,1049.7 L541.3,1050.0 L543.8,1049.3 L546.2,1048.0 L548.7,1046.7 L551.1,980.8 L553.6,972.4 L556.0,1049.5 L558.4,1049.0 L560.9,1048.2 L563.3,1047.2 L565.8,1047.9 L568.2,1050.3 L570.7,989.9 L573.1,1050.0 L575.5,1048.7 L578.0,1047.0 L580.4,1011.9 L582.9,1050.1 L585.3,1050.2 L587.7,1002.1 L590.2,999.0 L592.6,1047.1 L595.1,1048.4 L597.5,1049.4 L600.0,1049.8 L602.4,1002.1 L604.8,989.9 L607.3,1047.5 L609.7,1048.8 L612.2,1049.5 L614.6,1049.4 L617.1,1049.5 L619.5,1048.0 L621.9,963.3 L624.4,1048.1 L626.8,1049.2 L629.3,1049.3 L631.7,1049.3 L634.1,1047.7 L636.6,1046.2 L639.0,954.2 L641.5,962.5 L643.9,1049.0 L646.4,1048.7 L648.8,1048.6 L651.2,1046.8 L653.7,1048.1 L656.1,1049.1 L658.6,981.2 L661.0,1049.5 L663.5,1048.4 L665.9,1046.5 L668.3,1048.2 L670.8,1049.4 L673.2,1049.5 L675.7,989.9 L678.1,997.5 L680.6,1047.2 L683.0,1047.9 L685.4,1049.8 L687.9,1049.8 L690.3,1007.7 L692.8,1047.9 L695.2,1047.1 L697.6,1047.5 L700.1,1049.2 L702.5,1049.4 L705.0,980.8 L707.4,1047.8 L709.9,963.3 L712.3,1047.7 L714.7,1049.0 L717.2,1048.6 L719.6,1049.1 L722.1,1046.9 L724.5,1047.1 L727.0,954.2 L729.4,1048.5 L731.8,1049.5 L734.3,1049.4 L736.7,1047.4 L739.2,1046.7 L741.6,962.5 L744.0,1048.7 L746.5,936.6 L748.9,1048.6 L751.4,1046.7 L753.8,1046.1 L756.3,1048.2 L758.7,1048.3" fill="none" stroke="#5bb4f6" stroke-width="3" stroke-linejoin="miter" stroke-miterlimit="3"/>
<line x1="245.2" y1="1168.4" x2="282.6" y2="1168.4" stroke="#83554a" stroke-width="2.6"/>
<circle cx="263.9" cy="1168.7" r="8.2" fill="#fff" stroke="#83554a" stroke-width="2.7"/>
<line x1="382.2" y1="1168.4" x2="420" y2="1168.4" stroke="#4853d8" stroke-width="2.6"/>
<circle cx="401.1" cy="1168.7" r="8.2" fill="#fff" stroke="#4853d8" stroke-width="2.7"/>
<line x1="485.7" y1="1168.4" x2="523.2" y2="1168.4" stroke="#5bb4f6" stroke-width="2.6"/>
<circle cx="504.5" cy="1168.7" r="8.2" fill="#fff" stroke="#5bb4f6" stroke-width="2.7"/>
<line x1="903.5" y1="1025.0" x2="1556" y2="1025.0" stroke="#e3e8ec" stroke-width="1.3" stroke-dasharray="5.8 3.2" stroke-dashoffset="-1"/>
<line x1="903.5" y1="980.8" x2="1556" y2="980.8" stroke="#e3e8ec" stroke-width="1.3" stroke-dasharray="5.8 3.2" stroke-dashoffset="-1"/>
<line x1="903.5" y1="936.6" x2="1556" y2="936.6" stroke="#e3e8ec" stroke-width="1.3" stroke-dasharray="5.8 3.2" stroke-dashoffset="-1"/>
<line x1="903.5" y1="892.4" x2="1556" y2="892.4" stroke="#e3e8ec" stroke-width="1.3" stroke-dasharray="5.8 3.2" stroke-dashoffset="-1"/>
<line x1="903.5" y1="848.2" x2="1556" y2="848.2" stroke="#e3e8ec" stroke-width="1.3" stroke-dasharray="5.8 3.2" stroke-dashoffset="-1"/>
<line x1="903.5" y1="804.0" x2="1556" y2="804.0" stroke="#e3e8ec" stroke-width="1.3" stroke-dasharray="5.8 3.2" stroke-dashoffset="-1"/>
<line x1="903.5" y1="1069.2" x2="1556" y2="1069.2" stroke="#6b7785" stroke-width="1.6"/>
<line x1="935.1" y1="1069.2" x2="935.1" y2="1076.2" stroke="#6b7785" stroke-width="1.5"/>
<line x1="1028.9" y1="1069.2" x2="1028.9" y2="1076.2" stroke="#6b7785" stroke-width="1.5"/>
<line x1="1122.6" y1="1069.2" x2="1122.6" y2="1076.2" stroke="#6b7785" stroke-width="1.5"/>
<line x1="1216.4" y1="1069.2" x2="1216.4" y2="1076.2" stroke="#6b7785" stroke-width="1.5"/>
<line x1="1310.2" y1="1069.2" x2="1310.2" y2="1076.2" stroke="#6b7785" stroke-width="1.5"/>
<line x1="1404.0" y1="1069.2" x2="1404.0" y2="1076.2" stroke="#6b7785" stroke-width="1.5"/>
<line x1="1497.7" y1="1069.2" x2="1497.7" y2="1076.2" stroke="#6b7785" stroke-width="1.5"/>
<path d="M903.5,899.1 L906.4,966.8 L909.6,902.3 L911.9,901.5 L914.3,911.1 L916.7,915.8 L918.3,915.0 L919.4,898.8 L922.3,977.9 L924.7,903.1 L927.1,902.3 L930.3,909.5 L932.6,912.6 L935.4,899.1 L938.2,899.9 L940.6,944.5 L943.0,908.7 L946.2,898.3 L948.6,902.3 L951.0,915.0 L954.1,900.7 L957.3,896.7 L959.2,898.3 L961.3,959.6 L964.5,896.7 L966.9,899.1 L969.3,911.9 L971.7,913.4 L974.1,897.5 L977.2,897.5 L979.6,957.2 L982.0,896.7 L985.2,898.3 L987.6,905.5 L990.5,915.8 L993.6,895.9 L996.4,899.1 L998.4,904.7 L1000.7,943.7 L1003.5,898.3 L1006.4,899.9 L1008.8,910.3 L1011.5,908.7 L1013.9,904.7 L1016.6,947.7 L1019.1,897.5 L1021.8,897.5 L1024.2,909.5 L1027.4,907.9 L1029.8,895.9 L1032.2,895.9 L1034.7,970.8 L1037.3,898.3 L1040.1,898.3 L1042.9,907.9 L1044.9,915.0 L1047.3,899.9 L1050.5,896.7 L1052.9,919.8 L1055.8,924.6 L1058.5,896.7 L1060.9,898.3 L1063.2,909.5 L1065.6,907.9 L1068.8,898.3 L1071.2,895.9 L1074.2,971.6 L1076.8,895.9 L1080.0,898.3 L1082.4,908.7 L1084.7,911.9 L1087.9,897.5 L1090.3,896.7 L1092.7,937.3 L1095.1,910.3 L1097.5,898.3 L1100.4,902.3 L1102.3,913.4 L1104.7,902.3 L1105.8,901.5 L1108.2,932.6 L1111.0,907.1 L1113.4,898.3 L1115.8,902.3 L1118.2,914.2 L1121.4,900.7 L1124.6,897.5 L1126.9,897.5 L1128.9,960.4 L1131.7,897.5 L1134.1,895.9 L1136.5,909.5 L1138.9,911.9 L1141.3,899.9 L1144.5,892.7 L1147.3,957.6 L1150.0,899.9 L1153.2,899.9 L1155.6,905.5 L1158.0,915.8 L1160.4,897.5 L1163.6,899.1 L1166.0,904.7 L1168.5,949.6 L1170.7,899.9 L1173.9,899.1 L1176.3,910.3 L1178.7,908.7 L1181.9,899.1 L1184.3,898.3 L1186.7,976.4 L1189.1,899.1 L1192.2,897.5 L1195.0,907.1 L1197.0,915.0 L1199.4,896.7 L1202.3,961.5 L1205.0,897.5 L1208.2,897.5 L1210.6,907.9 L1212.9,914.2 L1216.9,896.7 L1220.1,921.4 L1223.3,929.4 L1226.6,900.2 L1229.0,900.2 L1231.5,910.7 L1233.9,907.5 L1236.3,897.8 L1239.6,896.2 L1241.8,971.4 L1244.4,899.4 L1246.8,898.6 L1249.3,909.1 L1252.2,914.0 L1255.7,897.8 L1258.1,898.6 L1260.2,947.1 L1263.0,910.7 L1265.4,901.0 L1267.8,905.1 L1270.8,915.6 L1273.5,902.6 L1276.4,898.6 L1278.4,898.6 L1280.9,962.5 L1284.0,898.6 L1286.4,897.8 L1288.9,909.9 L1291.3,912.3 L1294.2,894.6 L1296.5,958.4 L1299.4,900.2 L1301.8,900.2 L1304.2,909.9 L1307.5,911.5 L1310.7,897.8 L1312.3,898.6 L1315.1,959.2 L1318.0,901.8 L1320.4,900.2 L1322.8,906.7 L1325.6,918.8 L1328.5,899.4 L1330.9,897.0 L1333.3,904.3 L1335.9,945.5 L1339.0,900.2 L1341.4,900.2 L1344.2,911.5 L1346.6,909.1 L1349.5,897.8 L1351.9,897.8 L1354.3,973.0 L1356.8,902.6 L1359.5,901.0 L1362.1,909.1 L1364.9,918.0 L1368.1,897.0 L1370.8,897.8 L1372.9,921.2 L1375.4,926.9 L1377.8,899.4 L1380.2,901.0 L1382.6,913.1 L1385.1,907.5 L1387.5,914.0 L1390.9,942.7 L1394.0,919.6 L1396.4,920.4 L1398.8,930.9 L1401.2,922.8 L1404.5,916.4 L1406.9,917.2 L1409.3,985.9 L1412.2,920.4 L1415.0,920.4 L1417.4,929.3 L1420.6,930.1 L1423.5,916.4 L1425.5,917.2 L1427.9,956.8 L1430.3,935.0 L1433.6,918.8 L1436.0,920.4 L1438.4,930.9 L1440.8,922.0 L1443.3,917.2 L1445.7,925.3 L1448.4,975.4 L1451.4,918.8 L1453.8,919.6 L1457.0,928.5 L1459.4,929.3 L1461.9,916.4 L1464.0,916.4 L1466.9,967.6 L1469.9,915.6 L1472.4,915.6 L1475.6,921.2 L1477.5,930.9 L1480.1,917.2 L1482.4,960.8 L1485.3,913.1 L1487.7,913.1 L1490.5,919.6 L1493.4,930.1 L1497.4,913.1 L1499.9,914.8 L1503.4,959.2 L1506.3,916.4 L1508.8,917.2 L1511.5,927.7 L1514.4,922.8 L1517.6,913.1 L1519.6,914.0 L1522.2,975.4 L1524.9,916.4 L1527.3,917.2 L1529.8,924.5 L1532.2,930.9 L1535.4,914.8 L1537.9,915.6 L1540.3,939.8 L1543.2,943.9 L1545.9,916.4 L1548.4,918.8 L1550.8,928.5 L1555.6,914.8" fill="none" stroke="#83554a" stroke-width="3" stroke-linejoin="miter" stroke-miterlimit="2"/>
<line x1="1162.9" y1="1168.4" x2="1200.4" y2="1168.4" stroke="#83554a" stroke-width="2.6"/>
<circle cx="1181.7" cy="1168.7" r="8.2" fill="#fff" stroke="#83554a" stroke-width="2.7"/>
<line x1="1689.7" y1="1016.2" x2="2353.5" y2="1016.2" stroke="#e3e8ec" stroke-width="1.3" stroke-dasharray="5.8 3.2" stroke-dashoffset="-1"/>
<line x1="1689.7" y1="963.2" x2="2353.5" y2="963.2" stroke="#e3e8ec" stroke-width="1.3" stroke-dasharray="5.8 3.2" stroke-dashoffset="-1"/>
<line x1="1689.7" y1="910.2" x2="2353.5" y2="910.2" stroke="#e3e8ec" stroke-width="1.3" stroke-dasharray="5.8 3.2" stroke-dashoffset="-1"/>
<line x1="1689.7" y1="857.2" x2="2353.5" y2="857.2" stroke="#e3e8ec" stroke-width="1.3" stroke-dasharray="5.8 3.2" stroke-dashoffset="-1"/>
<line x1="1689.7" y1="804.2" x2="2353.5" y2="804.2" stroke="#e3e8ec" stroke-width="1.3" stroke-dasharray="5.8 3.2" stroke-dashoffset="-1"/>
<line x1="1689.7" y1="1069.2" x2="2353.5" y2="1069.2" stroke="#6b7785" stroke-width="1.6"/>
<line x1="1721.7" y1="1069.2" x2="1721.7" y2="1076.2" stroke="#6b7785" stroke-width="1.5"/>
<line x1="1816.9" y1="1069.2" x2="1816.9" y2="1076.2" stroke="#6b7785" stroke-width="1.5"/>
<line x1="1912.1" y1="1069.2" x2="1912.1" y2="1076.2" stroke="#6b7785" stroke-width="1.5"/>
<line x1="2007.4" y1="1069.2" x2="2007.4" y2="1076.2" stroke="#6b7785" stroke-width="1.5"/>
<line x1="2102.6" y1="1069.2" x2="2102.6" y2="1076.2" stroke="#6b7785" stroke-width="1.5"/>
<line x1="2197.8" y1="1069.2" x2="2197.8" y2="1076.2" stroke="#6b7785" stroke-width="1.5"/>
<line x1="2293.0" y1="1069.2" x2="2293.0" y2="1076.2" stroke="#6b7785" stroke-width="1.5"/>
<line x1="1689.7" y1="892.5" x2="2353.5" y2="892.5" stroke="#83554a" stroke-width="3"/>
<line x1="1954.1" y1="1168.4" x2="1992" y2="1168.4" stroke="#83554a" stroke-width="2.6"/>
<circle cx="1973.0" cy="1168.7" r="8.2" fill="#fff" stroke="#83554a" stroke-width="2.7"/>
<circle cx="58" cy="1343.7" r="8.3" fill="none" stroke="#65717d" stroke-width="1.6"/>
<line x1="64" y1="1350" x2="71.5" y2="1357.5" stroke="#65717d" stroke-width="1.6" stroke-linecap="round"/>
<circle cx="2190.8" cy="1345.8" r="14.6" fill="none" stroke="#2f55c4" stroke-width="1.6"/>
<line x1="2183.5" y1="1345.8" x2="2198.1" y2="1345.8" stroke="#2f55c4" stroke-width="1.6"/>
<line x1="2190.8" y1="1338.5" x2="2190.8" y2="1353.1" stroke="#2f55c4" stroke-width="1.6"/>
<circle cx="176.4" cy="1441.9" r="8.5" fill="#b4b5b8"/>
<rect x="175.5" y="1437.7" width="1.8" height="1.6" fill="#fff"/>
<rect x="175.5" y="1440.3" width="1.8" height="6" fill="#fff"/>
<circle cx="539.5" cy="1444.4" r="8.5" fill="#b4b5b8"/>
<rect x="538.6" y="1440.2" width="1.8" height="1.6" fill="#fff"/>
<rect x="538.6" y="1442.8" width="1.8" height="6" fill="#fff"/>
<polygon points="564.0,1444.9 575.0,1444.9 569.5,1439.1" fill="#6e7b87"/>
<polygon points="564.0,1446.1 575.0,1446.1 569.5,1451.9" fill="#1a1d21"/>
<circle cx="795.3" cy="1441.6" r="8.5" fill="#b4b5b8"/>
<rect x="794.4" y="1437.4" width="1.8" height="1.6" fill="#fff"/>
<rect x="794.4" y="1440.0" width="1.8" height="6" fill="#fff"/>
<circle cx="1208.5" cy="1444.4" r="8.5" fill="#b4b5b8"/>
<rect x="1207.6" y="1440.2" width="1.8" height="1.6" fill="#fff"/>
<rect x="1207.6" y="1442.8" width="1.8" height="6" fill="#fff"/>
<polygon points="1233.0,1444.9 1244.0,1444.9 1238.5,1439.1" fill="#d5d9dd"/>
<polygon points="1233.0,1446.1 1244.0,1446.1 1238.5,1451.9" fill="#d5d9dd"/>
<circle cx="1462.5" cy="1441.4" r="8.5" fill="#b4b5b8"/>
<rect x="1461.6" y="1437.2" width="1.8" height="1.6" fill="#fff"/>
<rect x="1461.6" y="1439.8" width="1.8" height="6" fill="#fff"/>
<circle cx="1936.4" cy="1441.6" r="8.5" fill="#b4b5b8"/>
<rect x="1935.5" y="1437.4" width="1.8" height="1.6" fill="#fff"/>
<rect x="1935.5" y="1440.0" width="1.8" height="6" fill="#fff"/>
<rect x="1626.1" y="1510.5" width="12.6" height="15.2" rx="2.6" fill="#fff" stroke="#3d62d3" stroke-width="1.5"/>
<path d="M1631.5,1507.6 a2.6,2.6 0 0 1 2.6,-2.6 h6 l3.9,3.9 v10 a2.6,2.6 0 0 1 -2.6,2.6 h-7.3 a2.6,2.6 0 0 1 -2.6,-2.6 z" fill="#fff" stroke="#3d62d3" stroke-width="1.5"/>
<line x1="1634.3" y1="1511.8" x2="1640.1" y2="1511.8" stroke="#3d62d3" stroke-width="1.3"/>
<line x1="1634.3" y1="1514.8" x2="1638.1" y2="1514.8" stroke="#3d62d3" stroke-width="1.3"/>
<rect x="1623.5" y="1589.5" width="12.6" height="15.2" rx="2.6" fill="#fff" stroke="#3d62d3" stroke-width="1.5"/>
<path d="M1628.9,1586.6 a2.6,2.6 0 0 1 2.6,-2.6 h6 l3.9,3.9 v10 a2.6,2.6 0 0 1 -2.6,2.6 h-7.3 a2.6,2.6 0 0 1 -2.6,-2.6 z" fill="#fff" stroke="#3d62d3" stroke-width="1.5"/>
<line x1="1631.7" y1="1590.8" x2="1637.5" y2="1590.8" stroke="#3d62d3" stroke-width="1.3"/>
<line x1="1631.7" y1="1593.8" x2="1635.5" y2="1593.8" stroke="#3d62d3" stroke-width="1.3"/>
<rect x="1625.8" y="1668.5" width="12.6" height="15.2" rx="2.6" fill="#fff" stroke="#3d62d3" stroke-width="1.5"/>
<path d="M1631.2,1665.6 a2.6,2.6 0 0 1 2.6,-2.6 h6 l3.9,3.9 v10 a2.6,2.6 0 0 1 -2.6,2.6 h-7.3 a2.6,2.6 0 0 1 -2.6,-2.6 z" fill="#fff" stroke="#3d62d3" stroke-width="1.5"/>
<line x1="1634.0" y1="1669.8" x2="1639.8" y2="1669.8" stroke="#3d62d3" stroke-width="1.3"/>
<line x1="1634.0" y1="1672.8" x2="1637.8" y2="1672.8" stroke="#3d62d3" stroke-width="1.3"/>
<rect x="1625.8" y="1747.5" width="12.6" height="15.2" rx="2.6" fill="#fff" stroke="#3d62d3" stroke-width="1.5"/>
<path d="M1631.2,1744.6 a2.6,2.6 0 0 1 2.6,-2.6 h6 l3.9,3.9 v10 a2.6,2.6 0 0 1 -2.6,2.6 h-7.3 a2.6,2.6 0 0 1 -2.6,-2.6 z" fill="#fff" stroke="#3d62d3" stroke-width="1.5"/>
<line x1="1634.0" y1="1748.8" x2="1639.8" y2="1748.8" stroke="#3d62d3" stroke-width="1.3"/>
<line x1="1634.0" y1="1751.8" x2="1637.8" y2="1751.8" stroke="#3d62d3" stroke-width="1.3"/>
<rect x="1624.5" y="1826.5" width="12.6" height="15.2" rx="2.6" fill="#fff" stroke="#3d62d3" stroke-width="1.5"/>
<path d="M1629.9,1823.6 a2.6,2.6 0 0 1 2.6,-2.6 h6 l3.9,3.9 v10 a2.6,2.6 0 0 1 -2.6,2.6 h-7.3 a2.6,2.6 0 0 1 -2.6,-2.6 z" fill="#fff" stroke="#3d62d3" stroke-width="1.5"/>
<line x1="1632.7" y1="1827.8" x2="1638.5" y2="1827.8" stroke="#3d62d3" stroke-width="1.3"/>
<line x1="1632.7" y1="1830.8" x2="1636.5" y2="1830.8" stroke="#3d62d3" stroke-width="1.3"/>
<rect x="1625.8" y="1905.5" width="12.6" height="15.2" rx="2.6" fill="#fff" stroke="#3d62d3" stroke-width="1.5"/>
<path d="M1631.2,1902.6 a2.6,2.6 0 0 1 2.6,-2.6 h6 l3.9,3.9 v10 a2.6,2.6 0 0 1 -2.6,2.6 h-7.3 a2.6,2.6 0 0 1 -2.6,-2.6 z" fill="#fff" stroke="#3d62d3" stroke-width="1.5"/>
<line x1="1634.0" y1="1906.8" x2="1639.8" y2="1906.8" stroke="#3d62d3" stroke-width="1.3"/>
<line x1="1634.0" y1="1909.8" x2="1637.8" y2="1909.8" stroke="#3d62d3" stroke-width="1.3"/>
<polyline points="2051.5,1982 2058.8,1989.3 2066.1,1982" fill="none" stroke="#3a3f45" stroke-width="1.6"/>
<polyline points="2163.3,1978.3 2156,1985.3 2163.3,1992.3" fill="none" stroke="#8a949e" stroke-width="1.8"/>
<polyline points="2267,1978.3 2274.3,1985.3 2267,1992.3" fill="none" stroke="#8a949e" stroke-width="1.8"/>
</svg>
</body></html>
